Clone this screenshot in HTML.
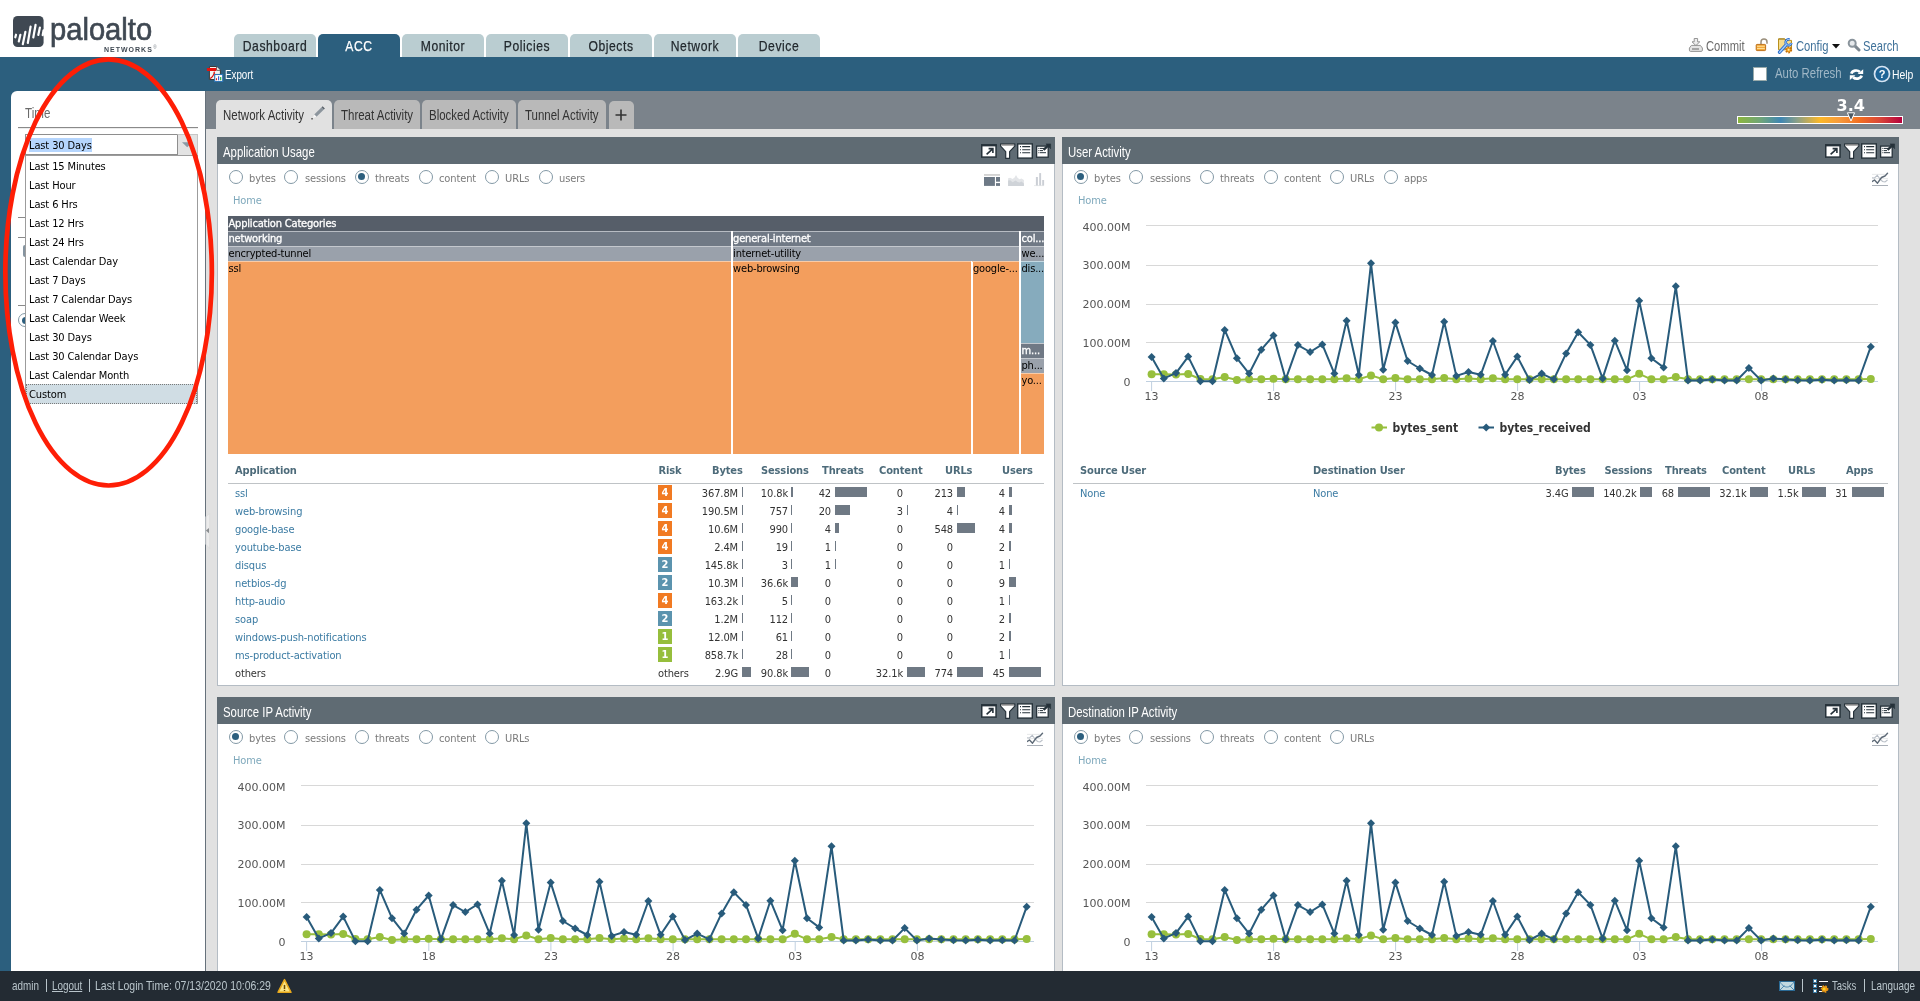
<!DOCTYPE html><html><head><meta charset="utf-8"><title>ACC</title><style>
*{box-sizing:border-box;margin:0;padding:0}
html,body{width:1920px;height:1001px;overflow:hidden;background:#fff}
body{position:relative;font-family:"DejaVu Sans Condensed","DejaVu Sans","Liberation Sans",sans-serif;font-size:11px;color:#333}
.a{position:absolute}
.n{position:absolute;white-space:nowrap;line-height:1;font-family:"Liberation Sans",sans-serif;transform-origin:0 50%;display:block}
.t{position:absolute;white-space:nowrap;line-height:1;font-size:11px;letter-spacing:-0.12px}
.tr{position:absolute;white-space:nowrap;line-height:1;font-size:11px;text-align:right}
.b{font-weight:bold;color:#4d6b7a}
.lk{color:#3b7ba3}
.bar{position:absolute;background:#6f7984;height:10px}
.rk{position:absolute;width:14px;height:15px;color:#fff;font-weight:bold;font-size:11px;line-height:16px;text-align:center}
.rd{position:absolute;width:14px;height:14px;border-radius:50%;border:1.3px solid #8399a6;background:#fff}
.rd.on:after{content:"";position:absolute;left:2.2px;top:2.2px;width:7px;height:7px;border-radius:50%;background:#2c5f7e}
.ph{position:absolute;height:27px;background:#5f6b73}
.pb{position:absolute;background:#fff;border:1px solid #b4bcc4;border-top:none}
.cv{font-family:"DejaVu Sans","Liberation Sans",sans-serif}
</style></head><body><div id="w" style="position:absolute;left:0;top:0;width:1920px;height:1001px;overflow:hidden;will-change:transform">
<div class="a" style="left:0px;top:57px;width:1920px;height:34px;background:#2c5f7e;"></div>
<div class="a" style="left:0px;top:91px;width:11px;height:880px;background:#2c5f7e;"></div>
<div class="a" style="left:11px;top:91px;width:8px;height:8px;background:#2c5f7e;"></div>
<div class="a" style="left:11px;top:91px;width:194px;height:880px;background:#fff;border-top-left-radius:6px;"></div>
<div class="a" style="left:205px;top:91px;width:1715px;height:38px;background:#7b838b;"></div>
<div class="a" style="left:205px;top:129px;width:1715px;height:842px;background:#e1e1e1;"></div>
<div class="a" style="left:205px;top:91px;width:1.2px;height:880px;background:#66717b;"></div>
<div class="a" style="left:0px;top:971px;width:1920px;height:30px;background:#232b33;"></div>
<svg class="a" style="left:13px;top:16px" width="32" height="31" viewBox="0 0 32 31"><rect x="0" y="0" width="30.6" height="31" rx="4.6" fill="#3f4852"/><g stroke="#fff" stroke-width="2.2" stroke-linecap="round" fill="none"><path d="M3 18.7L2.3 21.3"/><path d="M7.4 18.8L5.8 25.5"/><path d="M12.4 15.8L9.8 28.2"/><path d="M17.6 10.6L14.8 27"/><path d="M22.6 8.8L20.3 21.5"/><path d="M26.9 11.6L25.3 19"/><path d="M30.6 14.3L29.7 19.2"/></g></svg>
<span class="n" style="left:50px;top:12.93px;font-size:32px;color:#3f4852;transform:scaleX(0.911);-webkit-text-stroke:0.7px #3f4852;">paloalto</span>
<span class="n" style="left:104px;top:46.38px;font-size:7px;color:#3f4852;transform:scaleX(1.0);letter-spacing:1.0px;font-weight:bold;">NETWORKS</span>
<span class="n" style="left:153.2px;top:45.79px;font-size:4.5px;color:#7a828a;transform:scaleX(1.0);">&#174;</span>
<div class="a" style="left:234px;top:34px;width:82px;height:23px;background:#bacdd1;border-radius:5px 5px 0 0"></div>
<span class="n" style="left:234px;top:38.41px;-webkit-text-stroke:0.25px;width:101.23px;text-align:center;font-size:15px;color:#22292e;transform:scaleX(0.81);letter-spacing:0.7px">Dashboard</span>
<div class="a" style="left:318px;top:34px;width:82px;height:23px;background:#2c5f7e;border-radius:5px 5px 0 0"></div>
<span class="n" style="left:318px;top:38.41px;-webkit-text-stroke:0.25px;width:101.23px;text-align:center;font-size:15px;color:#fff;transform:scaleX(0.81);letter-spacing:0.7px">ACC</span>
<div class="a" style="left:402px;top:34px;width:82px;height:23px;background:#bacdd1;border-radius:5px 5px 0 0"></div>
<span class="n" style="left:402px;top:38.41px;-webkit-text-stroke:0.25px;width:101.23px;text-align:center;font-size:15px;color:#22292e;transform:scaleX(0.81);letter-spacing:0.7px">Monitor</span>
<div class="a" style="left:486px;top:34px;width:82px;height:23px;background:#bacdd1;border-radius:5px 5px 0 0"></div>
<span class="n" style="left:486px;top:38.41px;-webkit-text-stroke:0.25px;width:101.23px;text-align:center;font-size:15px;color:#22292e;transform:scaleX(0.81);letter-spacing:0.7px">Policies</span>
<div class="a" style="left:570px;top:34px;width:82px;height:23px;background:#bacdd1;border-radius:5px 5px 0 0"></div>
<span class="n" style="left:570px;top:38.41px;-webkit-text-stroke:0.25px;width:101.23px;text-align:center;font-size:15px;color:#22292e;transform:scaleX(0.81);letter-spacing:0.7px">Objects</span>
<div class="a" style="left:654px;top:34px;width:82px;height:23px;background:#bacdd1;border-radius:5px 5px 0 0"></div>
<span class="n" style="left:654px;top:38.41px;-webkit-text-stroke:0.25px;width:101.23px;text-align:center;font-size:15px;color:#22292e;transform:scaleX(0.81);letter-spacing:0.7px">Network</span>
<div class="a" style="left:738px;top:34px;width:82px;height:23px;background:#bacdd1;border-radius:5px 5px 0 0"></div>
<span class="n" style="left:738px;top:38.41px;-webkit-text-stroke:0.25px;width:101.23px;text-align:center;font-size:15px;color:#22292e;transform:scaleX(0.81);letter-spacing:0.7px">Device</span>
<svg class="a" style="left:1688px;top:37px" width="16" height="16" viewBox="0 0 16 16"><path d="M6.2 1.5h3.4v3.3h2.2L7.9 8.6 4 4.8h2.2z" fill="#ededed" stroke="#8a8a8a" stroke-width="0.9"/><path d="M3.4 8.4h9l2 2.6v2.2a1.2 1.2 0 0 1-1.2 1.2H2.6a1.2 1.2 0 0 1-1.2-1.2V11z" fill="#e4e4e4" stroke="#8a8a8a" stroke-width="0.9"/><path d="M4 12h7" stroke="#666" stroke-width="1"/></svg>
<span class="n" style="left:1706px;top:38.76px;font-size:14px;color:#6a6a6a;transform:scaleX(0.8);">Commit</span>
<svg class="a" style="left:1755px;top:38px" width="14" height="14" viewBox="0 0 14 14"><path d="M6 6.5V4a3 3 0 0 1 6 0v1.8" fill="none" stroke="#9a8f7c" stroke-width="1.5"/><rect x="1.2" y="6.4" width="9.4" height="6.2" rx="0.8" fill="#f2a93a" stroke="#b8660e" stroke-width="0.9"/><path d="M2 8.3h7.8M2 10.5h7.8" stroke="#ffe2a0" stroke-width="0.9"/></svg>
<svg class="a" style="left:1777px;top:37px" width="18" height="18" viewBox="0 0 18 18"><path d="M1.5 1.8h6.2l1.6 1.6h5.2v9.4h-13z" fill="#f6dc8c" stroke="#b8901e" stroke-width="1"/><path d="M1.8 2.1h5.8l1.6 1.6" fill="none" stroke="#7a5e10" stroke-width="0.6"/><circle cx="11.6" cy="12.8" r="2.6" fill="#f3a21c" stroke="#c4700c" stroke-width="2" stroke-dasharray="1.5 1.2"/><circle cx="11.6" cy="12.8" r="1" fill="#ffe9a8"/><path d="M2.6 15.2l6.6-7.4" stroke="#2b6fd0" stroke-width="3.4" stroke-linecap="round"/><path d="M12.6 2.6a2.9 2.9 0 1 0 1.8 3.4" fill="none" stroke="#2b6fd0" stroke-width="2.6"/><path d="M2.6 15.2l6.6-7.4" stroke="#a9d0fa" stroke-width="1.3" stroke-linecap="round"/><path d="M12.6 2.6a2.9 2.9 0 1 0 1.8 3.4" fill="none" stroke="#a9d0fa" stroke-width="0.9"/></svg>
<span class="n" style="left:1796px;top:38.76px;font-size:14px;color:#40729a;transform:scaleX(0.8);">Config</span>
<svg class="a" style="left:1832px;top:44px" width="8" height="5" viewBox="0 0 8 5"><path d="M0 0h8L4 4.5z" fill="#111"/></svg>
<svg class="a" style="left:1847px;top:38px" width="14" height="14" viewBox="0 0 14 14"><path d="M7.6 7.6l4.4 4.4" stroke="#7d8790" stroke-width="3" stroke-linecap="round"/><circle cx="5.2" cy="5.2" r="3.5" fill="#e6e9ec" stroke="#8a949c" stroke-width="2"/></svg>
<span class="n" style="left:1863px;top:38.76px;font-size:14px;color:#40729a;transform:scaleX(0.8);">Search</span>
<svg class="a" style="left:206px;top:65px" width="18" height="18" viewBox="0 0 18 18"><path d="M3.4 1.5h7.4l3.6 3.6v9.4h-11z" fill="#f3f3f3" stroke="#3a3a3a" stroke-width="1"/><path d="M10.6 1.7v3.6h3.6" fill="#fff" stroke="#3a3a3a" stroke-width="0.8"/><rect x="0.9" y="3" width="9.4" height="3" rx="0.4" fill="#e8100c"/><path d="M4 13.6c2.3-1.2 3.9-3.6 4.5-7M7.6 7.4c.8 1.8 1.9 3 3.4 3.8" fill="none" stroke="#d8100c" stroke-width="1.1"/><rect x="8.7" y="9.5" width="8" height="7" fill="#fff" stroke="#2e75b6" stroke-width="1.1"/><path d="M10.5 15.2v-2" stroke="#e0201a" stroke-width="1.1"/><path d="M12.6 15.2v-4" stroke="#2f55c8" stroke-width="1.1"/><path d="M14.7 15.2v-3.2" stroke="#18a838" stroke-width="1.1"/></svg>
<span class="n" style="left:225px;top:67.50px;font-size:13px;color:#fff;transform:scaleX(0.75);">Export</span>
<div class="a" style="left:1753px;top:67px;width:14px;height:14px;background:#fff;border:1px solid #9aa;"></div>
<span class="n" style="left:1775px;top:64.91px;font-size:15px;color:#9fb7c6;transform:scaleX(0.76);">Auto Refresh</span>
<svg class="a" style="left:1849px;top:68px" width="16" height="14" viewBox="0 0 16 14"><g fill="none" stroke="#fff" stroke-width="2.7"><path d="M2.3 5.6a5 4.2 0 0 1 8.6-1.6"/><path d="M12.7 7.6a5 4.2 0 0 1-8.6 1.6"/></g><path d="M8.6 5.9h5.6V1.2z" fill="#fff"/><path d="M6.4 7.3H0.8v4.7z" fill="#fff"/></svg>
<svg class="a" style="left:1873px;top:65px" width="18" height="18" viewBox="0 0 18 18"><circle cx="9" cy="9" r="7.5" fill="#1f6597" stroke="#d6e4f2" stroke-width="1.7"/><text x="9" y="13" text-anchor="middle" font-family="Liberation Sans,sans-serif" font-weight="bold" font-size="11" fill="#fff">?</text></svg>
<span class="n" style="left:1892px;top:67.80px;font-size:13px;color:#fff;transform:scaleX(0.8);">Help</span>
<div class="a" style="left:216px;top:100px;width:116px;height:29px;background:#e1e1e1;border-radius:5px 5px 0 0;"></div>
<span class="n" style="left:223px;top:108.16px;font-size:14px;color:#333;transform:scaleX(0.82);">Network Activity</span>
<svg class="a" style="left:310px;top:104px" width="16" height="17" viewBox="0 0 16 17"><path d="M4.2 10.4L11.6 3.2l2.3 2.3-7.4 7.2z" fill="#8c959d"/><path d="M11.6 3.2l1-1 2.3 2.3-1 1z" fill="#565e66"/><path d="M4.2 10.4l-1.5 3.7 3.8-1.4z" fill="#f6f6f6"/><rect x="1.3" y="14" width="1.5" height="1.5" fill="#555"/></svg>
<div class="a" style="left:334px;top:100px;width:86px;height:29px;background:#b9b9b9;border-radius:5px 5px 0 0;"></div>
<span class="n" style="left:340.5px;top:108.16px;font-size:14px;color:#333;transform:scaleX(0.82);">Threat Activity</span>
<div class="a" style="left:422px;top:100px;width:94px;height:29px;background:#b9b9b9;border-radius:5px 5px 0 0;"></div>
<span class="n" style="left:428.5px;top:108.16px;font-size:14px;color:#333;transform:scaleX(0.82);">Blocked Activity</span>
<div class="a" style="left:518px;top:100px;width:88px;height:29px;background:#b9b9b9;border-radius:5px 5px 0 0;"></div>
<span class="n" style="left:525px;top:108.16px;font-size:14px;color:#333;transform:scaleX(0.82);">Tunnel Activity</span>
<div class="a" style="left:609px;top:101px;width:24.5px;height:28px;background:#b9b9b9;border-radius:5px 5px 0 0;"></div>
<svg class="a" style="left:615px;top:109px" width="12" height="12" viewBox="0 0 12 12"><path d="M6 0.5v11M0.5 6h11" stroke="#333" stroke-width="1.6"/></svg>
<span class="n" style="left:1836.5px;top:97.76px;font-size:16px;color:#fff;transform:scaleX(1.0);font-family:'DejaVu Sans',sans-serif;font-weight:bold;">3.4</span>
<div class="a" style="left:1737px;top:116px;width:166px;height:8px;border:1px solid #fff;background:linear-gradient(90deg,#8cb63d 0%,#6fa57a 14%,#3f86b3 26%,#8aa089 36%,#fbb829 50%,#f79a3c 62%,#f26f21 74%,#d8453a 87%,#b5003c 100%)"></div>
<svg class="a" style="left:1845.6px;top:112px" width="10" height="10" viewBox="0 0 10 10"><path d="M1.4 0.8h7.2L5 9z" fill="#4d5a64" stroke="#fff" stroke-width="1"/></svg>
<div class="ph" style="left:217px;top:137px;width:838px"></div>
<div class="pb" style="left:217px;top:164px;width:838px;height:522px"></div>
<span class="n" style="left:223px;top:144.73px;font-size:14.5px;color:#fff;transform:scaleX(0.785);">Application Usage</span>
<svg class="a" style="left:980px;top:143px" width="72" height="17" viewBox="0 0 72 17"><rect x="1.75" y="2" width="14.3" height="12.1" fill="#fff" stroke="#26323a" stroke-width="1.5"/><path d="M1 2.3h15.8" stroke="#26323a" stroke-width="2.2"/><path d="M6.6 11.4l5.8-5.3M8.6 5.6h4.3v4.3" fill="none" stroke="#26323a" stroke-width="1.6"/><path d="M20.6 0.8h14.2v2.3l-5.2 5.6v6.7h-3.9V8.7l-5.1-5.6z" fill="#fff" stroke="#26323a" stroke-width="1.2" stroke-linejoin="round"/><path d="M21.4 1.9h12.6" stroke="#7b7b7b" stroke-width="1.4"/><rect x="37.7" y="0.9" width="14.6" height="14.2" fill="#fff" stroke="#26323a" stroke-width="1.4"/><path d="M40 3.6h1M42.2 3.6h8M40 6.7h1M42.2 6.7h8M40 9.8h1M42.2 9.8h8" stroke="#26323a" stroke-width="1.1"/><rect x="56.6" y="3.1" width="11.6" height="11.1" fill="#fff" stroke="#26323a" stroke-width="1.3"/><path d="M58.4 5.4h1M60 5.4h4M58.4 7.6h1M60 7.6h3M58.4 9.7h1M60 9.7h6" stroke="#26323a" stroke-width="1"/><path d="M63.6 6.8l5-4.6" stroke="#26323a" stroke-width="2.4"/><path d="M66 0.9h4.6v4.8z" fill="#26323a" stroke="#26323a" stroke-width="0.6" stroke-linejoin="round"/></svg>
<div class="ph" style="left:1062px;top:137px;width:837px"></div>
<div class="pb" style="left:1062px;top:164px;width:837px;height:522px"></div>
<span class="n" style="left:1068px;top:144.73px;font-size:14.5px;color:#fff;transform:scaleX(0.785);">User Activity</span>
<svg class="a" style="left:1824px;top:143px" width="72" height="17" viewBox="0 0 72 17"><rect x="1.75" y="2" width="14.3" height="12.1" fill="#fff" stroke="#26323a" stroke-width="1.5"/><path d="M1 2.3h15.8" stroke="#26323a" stroke-width="2.2"/><path d="M6.6 11.4l5.8-5.3M8.6 5.6h4.3v4.3" fill="none" stroke="#26323a" stroke-width="1.6"/><path d="M20.6 0.8h14.2v2.3l-5.2 5.6v6.7h-3.9V8.7l-5.1-5.6z" fill="#fff" stroke="#26323a" stroke-width="1.2" stroke-linejoin="round"/><path d="M21.4 1.9h12.6" stroke="#7b7b7b" stroke-width="1.4"/><rect x="37.7" y="0.9" width="14.6" height="14.2" fill="#fff" stroke="#26323a" stroke-width="1.4"/><path d="M40 3.6h1M42.2 3.6h8M40 6.7h1M42.2 6.7h8M40 9.8h1M42.2 9.8h8" stroke="#26323a" stroke-width="1.1"/><rect x="56.6" y="3.1" width="11.6" height="11.1" fill="#fff" stroke="#26323a" stroke-width="1.3"/><path d="M58.4 5.4h1M60 5.4h4M58.4 7.6h1M60 7.6h3M58.4 9.7h1M60 9.7h6" stroke="#26323a" stroke-width="1"/><path d="M63.6 6.8l5-4.6" stroke="#26323a" stroke-width="2.4"/><path d="M66 0.9h4.6v4.8z" fill="#26323a" stroke="#26323a" stroke-width="0.6" stroke-linejoin="round"/></svg>
<div class="ph" style="left:217px;top:697px;width:838px"></div>
<div class="pb" style="left:217px;top:724px;width:838px;height:273px"></div>
<span class="n" style="left:223px;top:704.73px;font-size:14.5px;color:#fff;transform:scaleX(0.785);">Source IP Activity</span>
<svg class="a" style="left:980px;top:703px" width="72" height="17" viewBox="0 0 72 17"><rect x="1.75" y="2" width="14.3" height="12.1" fill="#fff" stroke="#26323a" stroke-width="1.5"/><path d="M1 2.3h15.8" stroke="#26323a" stroke-width="2.2"/><path d="M6.6 11.4l5.8-5.3M8.6 5.6h4.3v4.3" fill="none" stroke="#26323a" stroke-width="1.6"/><path d="M20.6 0.8h14.2v2.3l-5.2 5.6v6.7h-3.9V8.7l-5.1-5.6z" fill="#fff" stroke="#26323a" stroke-width="1.2" stroke-linejoin="round"/><path d="M21.4 1.9h12.6" stroke="#7b7b7b" stroke-width="1.4"/><rect x="37.7" y="0.9" width="14.6" height="14.2" fill="#fff" stroke="#26323a" stroke-width="1.4"/><path d="M40 3.6h1M42.2 3.6h8M40 6.7h1M42.2 6.7h8M40 9.8h1M42.2 9.8h8" stroke="#26323a" stroke-width="1.1"/><rect x="56.6" y="3.1" width="11.6" height="11.1" fill="#fff" stroke="#26323a" stroke-width="1.3"/><path d="M58.4 5.4h1M60 5.4h4M58.4 7.6h1M60 7.6h3M58.4 9.7h1M60 9.7h6" stroke="#26323a" stroke-width="1"/><path d="M63.6 6.8l5-4.6" stroke="#26323a" stroke-width="2.4"/><path d="M66 0.9h4.6v4.8z" fill="#26323a" stroke="#26323a" stroke-width="0.6" stroke-linejoin="round"/></svg>
<div class="ph" style="left:1062px;top:697px;width:837px"></div>
<div class="pb" style="left:1062px;top:724px;width:837px;height:273px"></div>
<span class="n" style="left:1068px;top:704.73px;font-size:14.5px;color:#fff;transform:scaleX(0.785);">Destination IP Activity</span>
<svg class="a" style="left:1824px;top:703px" width="72" height="17" viewBox="0 0 72 17"><rect x="1.75" y="2" width="14.3" height="12.1" fill="#fff" stroke="#26323a" stroke-width="1.5"/><path d="M1 2.3h15.8" stroke="#26323a" stroke-width="2.2"/><path d="M6.6 11.4l5.8-5.3M8.6 5.6h4.3v4.3" fill="none" stroke="#26323a" stroke-width="1.6"/><path d="M20.6 0.8h14.2v2.3l-5.2 5.6v6.7h-3.9V8.7l-5.1-5.6z" fill="#fff" stroke="#26323a" stroke-width="1.2" stroke-linejoin="round"/><path d="M21.4 1.9h12.6" stroke="#7b7b7b" stroke-width="1.4"/><rect x="37.7" y="0.9" width="14.6" height="14.2" fill="#fff" stroke="#26323a" stroke-width="1.4"/><path d="M40 3.6h1M42.2 3.6h8M40 6.7h1M42.2 6.7h8M40 9.8h1M42.2 9.8h8" stroke="#26323a" stroke-width="1.1"/><rect x="56.6" y="3.1" width="11.6" height="11.1" fill="#fff" stroke="#26323a" stroke-width="1.3"/><path d="M58.4 5.4h1M60 5.4h4M58.4 7.6h1M60 7.6h3M58.4 9.7h1M60 9.7h6" stroke="#26323a" stroke-width="1"/><path d="M63.6 6.8l5-4.6" stroke="#26323a" stroke-width="2.4"/><path d="M66 0.9h4.6v4.8z" fill="#26323a" stroke="#26323a" stroke-width="0.6" stroke-linejoin="round"/></svg>
<span class="rd" style="left:228.5px;top:170px"></span>
<span class="t " style="left:249px;top:173.00px;color:#7a7a7a;">bytes</span>
<span class="rd" style="left:284.4px;top:170px"></span>
<span class="t " style="left:305px;top:173.00px;color:#7a7a7a;">sessions</span>
<span class="rd on" style="left:354.5px;top:170px"></span>
<span class="t " style="left:375px;top:173.00px;color:#7a7a7a;">threats</span>
<span class="rd" style="left:418.5px;top:170px"></span>
<span class="t " style="left:439px;top:173.00px;color:#7a7a7a;">content</span>
<span class="rd" style="left:484.5px;top:170px"></span>
<span class="t " style="left:505px;top:173.00px;color:#7a7a7a;">URLs</span>
<span class="rd" style="left:538.5px;top:170px"></span>
<span class="t " style="left:559px;top:173.00px;color:#7a7a7a;">users</span>
<span class="t " style="left:233px;top:195.00px;color:#7fa9bc;">Home</span>
<span class="rd on" style="left:1073.5px;top:170px"></span>
<span class="t " style="left:1094px;top:173.00px;color:#7a7a7a;">bytes</span>
<span class="rd" style="left:1129.4px;top:170px"></span>
<span class="t " style="left:1150px;top:173.00px;color:#7a7a7a;">sessions</span>
<span class="rd" style="left:1199.5px;top:170px"></span>
<span class="t " style="left:1220px;top:173.00px;color:#7a7a7a;">threats</span>
<span class="rd" style="left:1263.5px;top:170px"></span>
<span class="t " style="left:1284px;top:173.00px;color:#7a7a7a;">content</span>
<span class="rd" style="left:1329.5px;top:170px"></span>
<span class="t " style="left:1350px;top:173.00px;color:#7a7a7a;">URLs</span>
<span class="rd" style="left:1383.5px;top:170px"></span>
<span class="t " style="left:1404px;top:173.00px;color:#7a7a7a;">apps</span>
<span class="t " style="left:1078px;top:195.00px;color:#7fa9bc;">Home</span>
<span class="rd on" style="left:228.5px;top:730px"></span>
<span class="t " style="left:249px;top:733.00px;color:#7a7a7a;">bytes</span>
<span class="rd" style="left:284.4px;top:730px"></span>
<span class="t " style="left:305px;top:733.00px;color:#7a7a7a;">sessions</span>
<span class="rd" style="left:354.5px;top:730px"></span>
<span class="t " style="left:375px;top:733.00px;color:#7a7a7a;">threats</span>
<span class="rd" style="left:418.5px;top:730px"></span>
<span class="t " style="left:439px;top:733.00px;color:#7a7a7a;">content</span>
<span class="rd" style="left:484.5px;top:730px"></span>
<span class="t " style="left:505px;top:733.00px;color:#7a7a7a;">URLs</span>
<span class="t " style="left:233px;top:755.00px;color:#7fa9bc;">Home</span>
<span class="rd on" style="left:1073.5px;top:730px"></span>
<span class="t " style="left:1094px;top:733.00px;color:#7a7a7a;">bytes</span>
<span class="rd" style="left:1129.4px;top:730px"></span>
<span class="t " style="left:1150px;top:733.00px;color:#7a7a7a;">sessions</span>
<span class="rd" style="left:1199.5px;top:730px"></span>
<span class="t " style="left:1220px;top:733.00px;color:#7a7a7a;">threats</span>
<span class="rd" style="left:1263.5px;top:730px"></span>
<span class="t " style="left:1284px;top:733.00px;color:#7a7a7a;">content</span>
<span class="rd" style="left:1329.5px;top:730px"></span>
<span class="t " style="left:1350px;top:733.00px;color:#7a7a7a;">URLs</span>
<span class="t " style="left:1078px;top:755.00px;color:#7fa9bc;">Home</span>
<svg class="a" style="left:1872px;top:172px" width="17" height="15" viewBox="0 0 17 15"><path d="M0 2.4h13M0 6.6h16" stroke="#dfe2e5" stroke-width="0.8"/><path d="M0 13.5h16" stroke="#aab0b8" stroke-width="1"/><path d="M0 5.8L2.5 6 5.3 3.3 8 7l2.5 2.5 2.5.5 2.5-2" fill="none" stroke="#b9bfc7" stroke-width="1.1"/><path d="M0.3 9.5L2.5 8l3 3.2 4-5.7L13 4l2.5-2.7" fill="none" stroke="#5f6b78" stroke-width="1.4" stroke-linejoin="round" stroke-linecap="round"/></svg>
<svg class="a" style="left:1027px;top:732px" width="17" height="15" viewBox="0 0 17 15"><path d="M0 2.4h13M0 6.6h16" stroke="#dfe2e5" stroke-width="0.8"/><path d="M0 13.5h16" stroke="#aab0b8" stroke-width="1"/><path d="M0 5.8L2.5 6 5.3 3.3 8 7l2.5 2.5 2.5.5 2.5-2" fill="none" stroke="#b9bfc7" stroke-width="1.1"/><path d="M0.3 9.5L2.5 8l3 3.2 4-5.7L13 4l2.5-2.7" fill="none" stroke="#5f6b78" stroke-width="1.4" stroke-linejoin="round" stroke-linecap="round"/></svg>
<svg class="a" style="left:1872px;top:732px" width="17" height="15" viewBox="0 0 17 15"><path d="M0 2.4h13M0 6.6h16" stroke="#dfe2e5" stroke-width="0.8"/><path d="M0 13.5h16" stroke="#aab0b8" stroke-width="1"/><path d="M0 5.8L2.5 6 5.3 3.3 8 7l2.5 2.5 2.5.5 2.5-2" fill="none" stroke="#b9bfc7" stroke-width="1.1"/><path d="M0.3 9.5L2.5 8l3 3.2 4-5.7L13 4l2.5-2.7" fill="none" stroke="#5f6b78" stroke-width="1.4" stroke-linejoin="round" stroke-linecap="round"/></svg>
<svg class="a" style="left:984px;top:173px" width="62" height="14" viewBox="0 0 62 14"><rect x="0" y="1.1" width="16" height="1.7" fill="#cfcfcf"/><rect x="0" y="4" width="10.9" height="8.9" fill="#6d7986"/><rect x="12" y="4" width="4" height="4.7" fill="#6d7986"/><rect x="12" y="10.1" width="4" height="2.8" fill="#6d7986"/><path d="M24.1 12.9V5.2l2-.4 2.5 1.3 2-1.6L32 2l1.5 2.8 2 1.5 2-.8 2.4 1.6v5.8z" fill="#e3e5e8"/><path d="M24.1 12.9V7.4l2-.2 2.5 2 3-1.8 2 1.6 2 .4 1.8-1 2.5 2v2.5z" fill="#cfd3d8"/><path d="M50 12.6h10" stroke="#e1e3e6" stroke-width="0.8"/><rect x="51.9" y="4" width="2" height="8.5" fill="#cbcfd5"/><rect x="55.2" y="0.1" width="1.9" height="12.4" fill="#cbcfd5"/><rect x="58.2" y="7" width="1.9" height="5.5" fill="#cbcfd5"/></svg>
<div class="a" style="left:228px;top:231px;width:816px;height:1px;background:#b7bcc3;"></div>
<div class="a" style="left:228px;top:246px;width:816px;height:1px;background:#c4c8ce;"></div>
<div class="a" style="left:228px;top:261px;width:816px;height:1px;background:#f9cba7;"></div>
<div class="a" style="left:731px;top:231px;width:1.6px;height:223px;background:#fff;"></div>
<div class="a" style="left:1019px;top:231px;width:1.9px;height:223px;background:#fff;"></div>
<div class="a" style="left:970.8px;top:261px;width:1.7px;height:193px;background:#fff;"></div>
<div class="a" style="left:1021px;top:343px;width:23px;height:1px;background:#c4c8ce;"></div>
<div class="a" style="left:1021px;top:358px;width:23px;height:1px;background:#c4c8ce;"></div>
<div class="a" style="left:1021px;top:373px;width:23px;height:1px;background:#f9cba7;"></div>
<div class="a" style="left:228px;top:216px;width:816px;height:15px;background:#565e69;color:#fff;font-size:11px;line-height:14px;padding-left:0.5px;overflow:hidden;white-space:nowrap;letter-spacing:-0.18px;line-height:16px;-webkit-text-stroke:0.3px #fff;">Application Categories</div>
<div class="a" style="left:228px;top:232px;width:503px;height:14px;background:#707985;color:#fff;font-size:11px;line-height:14px;padding-left:0.5px;overflow:hidden;white-space:nowrap;letter-spacing:-0.18px;-webkit-text-stroke:0.3px #fff;">networking</div>
<div class="a" style="left:732.6px;top:232px;width:286.4px;height:14px;background:#707985;color:#fff;font-size:11px;line-height:14px;padding-left:0.5px;overflow:hidden;white-space:nowrap;letter-spacing:-0.18px;-webkit-text-stroke:0.3px #fff;">general-internet</div>
<div class="a" style="left:1021px;top:232px;width:23px;height:14px;background:#707985;color:#fff;font-size:11px;line-height:14px;padding-left:0.5px;overflow:hidden;white-space:nowrap;letter-spacing:-0.18px;-webkit-text-stroke:0.3px #fff;">col...</div>
<div class="a" style="left:228px;top:247px;width:503px;height:14px;background:#9aa1ab;color:#000;font-size:11px;line-height:14px;padding-left:0.5px;overflow:hidden;white-space:nowrap;letter-spacing:-0.18px;">encrypted-tunnel</div>
<div class="a" style="left:732.6px;top:247px;width:286.4px;height:14px;background:#9aa1ab;color:#000;font-size:11px;line-height:14px;padding-left:0.5px;overflow:hidden;white-space:nowrap;letter-spacing:-0.18px;">internet-utility</div>
<div class="a" style="left:1021px;top:247px;width:23px;height:14px;background:#9aa1ab;color:#000;font-size:11px;line-height:14px;padding-left:0.5px;overflow:hidden;white-space:nowrap;letter-spacing:-0.18px;">we...</div>
<div class="a" style="left:228px;top:262px;width:503px;height:192px;background:#f39e5d;color:#000;font-size:11px;line-height:14px;padding-left:0.5px;overflow:hidden;white-space:nowrap;letter-spacing:-0.18px;">ssl</div>
<div class="a" style="left:732.6px;top:262px;width:238.2px;height:192px;background:#f39e5d;color:#000;font-size:11px;line-height:14px;padding-left:0.5px;overflow:hidden;white-space:nowrap;letter-spacing:-0.18px;">web-browsing</div>
<div class="a" style="left:972.5px;top:262px;width:46.5px;height:192px;background:#f39e5d;color:#000;font-size:11px;line-height:14px;padding-left:0.5px;overflow:hidden;white-space:nowrap;letter-spacing:-0.18px;">google-...</div>
<div class="a" style="left:1021px;top:261px;width:23px;height:1px;background:#c3d8e2;"></div>
<div class="a" style="left:1021px;top:262px;width:23px;height:81px;background:#86abbd;color:#000;font-size:11px;line-height:14px;padding-left:0.5px;overflow:hidden;white-space:nowrap;letter-spacing:-0.18px;">dis...</div>
<div class="a" style="left:1021px;top:344px;width:23px;height:14px;background:#707985;color:#fff;font-size:11px;line-height:14px;padding-left:0.5px;overflow:hidden;white-space:nowrap;letter-spacing:-0.18px;-webkit-text-stroke:0.3px #fff;">m...</div>
<div class="a" style="left:1021px;top:359px;width:23px;height:14px;background:#9aa1ab;color:#000;font-size:11px;line-height:14px;padding-left:0.5px;overflow:hidden;white-space:nowrap;letter-spacing:-0.18px;">ph...</div>
<div class="a" style="left:1021px;top:374px;width:23px;height:80px;background:#f39e5d;color:#000;font-size:11px;line-height:14px;padding-left:0.5px;overflow:hidden;white-space:nowrap;letter-spacing:-0.18px;">yo...</div>
<div class="a" style="left:228px;top:483px;width:816px;height:1px;background:#bfc3c6;"></div>
<span class="t b" style="left:235px;top:465.00px;">Application</span>
<span class="t b" style="left:658.5px;top:465.00px;">Risk</span>
<span class="t b" style="left:712px;top:465.00px;">Bytes</span>
<span class="t b" style="left:761px;top:465.00px;">Sessions</span>
<span class="t b" style="left:822px;top:465.00px;">Threats</span>
<span class="t b" style="left:879px;top:465.00px;">Content</span>
<span class="t b" style="left:945px;top:465.00px;">URLs</span>
<span class="t b" style="left:1002px;top:465.00px;">Users</span>
<span class="t lk" style="left:235px;top:488.00px;">ssl</span>
<span class="rk" style="left:658px;top:485px;background:#f17a22">4</span>
<span class="t " style="right:1182px;top:488.00px;">367.8M</span>
<span class="bar" style="left:742px;top:487px;width:1px"></span>
<span class="t " style="right:1132px;top:488.00px;">10.8k</span>
<span class="bar" style="left:791px;top:487px;width:2px"></span>
<span class="t " style="right:1089px;top:488.00px;">42</span>
<span class="bar" style="left:835px;top:487px;width:32px"></span>
<span class="t " style="right:1017px;top:488.00px;">0</span>
<span class="t " style="right:967px;top:488.00px;">213</span>
<span class="bar" style="left:957px;top:487px;width:8px"></span>
<span class="t " style="right:915px;top:488.00px;">4</span>
<span class="bar" style="left:1009px;top:487px;width:3px"></span>
<span class="t lk" style="left:235px;top:506.00px;">web-browsing</span>
<span class="rk" style="left:658px;top:503px;background:#f17a22">4</span>
<span class="t " style="right:1182px;top:506.00px;">190.5M</span>
<span class="bar" style="left:742px;top:505px;width:1px"></span>
<span class="t " style="right:1132px;top:506.00px;">757</span>
<span class="bar" style="left:791px;top:505px;width:1px"></span>
<span class="t " style="right:1089px;top:506.00px;">20</span>
<span class="bar" style="left:835px;top:505px;width:15px"></span>
<span class="t " style="right:1017px;top:506.00px;">3</span>
<span class="bar" style="left:907px;top:505px;width:1px"></span>
<span class="t " style="right:967px;top:506.00px;">4</span>
<span class="bar" style="left:957px;top:505px;width:1px"></span>
<span class="t " style="right:915px;top:506.00px;">4</span>
<span class="bar" style="left:1009px;top:505px;width:3px"></span>
<span class="t lk" style="left:235px;top:524.00px;">google-base</span>
<span class="rk" style="left:658px;top:521px;background:#f17a22">4</span>
<span class="t " style="right:1182px;top:524.00px;">10.6M</span>
<span class="bar" style="left:742px;top:523px;width:1px"></span>
<span class="t " style="right:1132px;top:524.00px;">990</span>
<span class="bar" style="left:791px;top:523px;width:1px"></span>
<span class="t " style="right:1089px;top:524.00px;">4</span>
<span class="bar" style="left:835px;top:523px;width:4px"></span>
<span class="t " style="right:1017px;top:524.00px;">0</span>
<span class="t " style="right:967px;top:524.00px;">548</span>
<span class="bar" style="left:957px;top:523px;width:18px"></span>
<span class="t " style="right:915px;top:524.00px;">4</span>
<span class="bar" style="left:1009px;top:523px;width:3px"></span>
<span class="t lk" style="left:235px;top:542.00px;">youtube-base</span>
<span class="rk" style="left:658px;top:539px;background:#f17a22">4</span>
<span class="t " style="right:1182px;top:542.00px;">2.4M</span>
<span class="bar" style="left:742px;top:541px;width:1px"></span>
<span class="t " style="right:1132px;top:542.00px;">19</span>
<span class="bar" style="left:791px;top:541px;width:1px"></span>
<span class="t " style="right:1089px;top:542.00px;">1</span>
<span class="bar" style="left:835px;top:541px;width:1px"></span>
<span class="t " style="right:1017px;top:542.00px;">0</span>
<span class="t " style="right:967px;top:542.00px;">0</span>
<span class="t " style="right:915px;top:542.00px;">2</span>
<span class="bar" style="left:1009px;top:541px;width:2px"></span>
<span class="t lk" style="left:235px;top:560.00px;">disqus</span>
<span class="rk" style="left:658px;top:557px;background:#5b93ae">2</span>
<span class="t " style="right:1182px;top:560.00px;">145.8k</span>
<span class="bar" style="left:742px;top:559px;width:1px"></span>
<span class="t " style="right:1132px;top:560.00px;">3</span>
<span class="bar" style="left:791px;top:559px;width:1px"></span>
<span class="t " style="right:1089px;top:560.00px;">1</span>
<span class="bar" style="left:835px;top:559px;width:1px"></span>
<span class="t " style="right:1017px;top:560.00px;">0</span>
<span class="t " style="right:967px;top:560.00px;">0</span>
<span class="t " style="right:915px;top:560.00px;">1</span>
<span class="bar" style="left:1009px;top:559px;width:1px"></span>
<span class="t lk" style="left:235px;top:578.00px;">netbios-dg</span>
<span class="rk" style="left:658px;top:575px;background:#5b93ae">2</span>
<span class="t " style="right:1182px;top:578.00px;">10.3M</span>
<span class="bar" style="left:742px;top:577px;width:1px"></span>
<span class="t " style="right:1132px;top:578.00px;">36.6k</span>
<span class="bar" style="left:791px;top:577px;width:7px"></span>
<span class="t " style="right:1089px;top:578.00px;">0</span>
<span class="t " style="right:1017px;top:578.00px;">0</span>
<span class="t " style="right:967px;top:578.00px;">0</span>
<span class="t " style="right:915px;top:578.00px;">9</span>
<span class="bar" style="left:1009px;top:577px;width:7px"></span>
<span class="t lk" style="left:235px;top:596.00px;">http-audio</span>
<span class="rk" style="left:658px;top:593px;background:#f17a22">4</span>
<span class="t " style="right:1182px;top:596.00px;">163.2k</span>
<span class="bar" style="left:742px;top:595px;width:1px"></span>
<span class="t " style="right:1132px;top:596.00px;">5</span>
<span class="bar" style="left:791px;top:595px;width:1px"></span>
<span class="t " style="right:1089px;top:596.00px;">0</span>
<span class="t " style="right:1017px;top:596.00px;">0</span>
<span class="t " style="right:967px;top:596.00px;">0</span>
<span class="t " style="right:915px;top:596.00px;">1</span>
<span class="bar" style="left:1009px;top:595px;width:1px"></span>
<span class="t lk" style="left:235px;top:614.00px;">soap</span>
<span class="rk" style="left:658px;top:611px;background:#5b93ae">2</span>
<span class="t " style="right:1182px;top:614.00px;">1.2M</span>
<span class="bar" style="left:742px;top:613px;width:1px"></span>
<span class="t " style="right:1132px;top:614.00px;">112</span>
<span class="bar" style="left:791px;top:613px;width:1px"></span>
<span class="t " style="right:1089px;top:614.00px;">0</span>
<span class="t " style="right:1017px;top:614.00px;">0</span>
<span class="t " style="right:967px;top:614.00px;">0</span>
<span class="t " style="right:915px;top:614.00px;">2</span>
<span class="bar" style="left:1009px;top:613px;width:2px"></span>
<span class="t lk" style="left:235px;top:632.00px;">windows-push-notifications</span>
<span class="rk" style="left:658px;top:629px;background:#96be3c">1</span>
<span class="t " style="right:1182px;top:632.00px;">12.0M</span>
<span class="bar" style="left:742px;top:631px;width:1px"></span>
<span class="t " style="right:1132px;top:632.00px;">61</span>
<span class="bar" style="left:791px;top:631px;width:1px"></span>
<span class="t " style="right:1089px;top:632.00px;">0</span>
<span class="t " style="right:1017px;top:632.00px;">0</span>
<span class="t " style="right:967px;top:632.00px;">0</span>
<span class="t " style="right:915px;top:632.00px;">2</span>
<span class="bar" style="left:1009px;top:631px;width:2px"></span>
<span class="t lk" style="left:235px;top:650.00px;">ms-product-activation</span>
<span class="rk" style="left:658px;top:647px;background:#96be3c">1</span>
<span class="t " style="right:1182px;top:650.00px;">858.7k</span>
<span class="bar" style="left:742px;top:649px;width:1px"></span>
<span class="t " style="right:1132px;top:650.00px;">28</span>
<span class="bar" style="left:791px;top:649px;width:1px"></span>
<span class="t " style="right:1089px;top:650.00px;">0</span>
<span class="t " style="right:1017px;top:650.00px;">0</span>
<span class="t " style="right:967px;top:650.00px;">0</span>
<span class="t " style="right:915px;top:650.00px;">1</span>
<span class="bar" style="left:1009px;top:649px;width:1px"></span>
<span class="t " style="left:235px;top:668.00px;">others</span>
<span class="t " style="left:658px;top:668.00px;">others</span>
<span class="t " style="right:1182px;top:668.00px;">2.9G</span>
<span class="bar" style="left:742px;top:667px;width:9px"></span>
<span class="t " style="right:1132px;top:668.00px;">90.8k</span>
<span class="bar" style="left:791px;top:667px;width:18px"></span>
<span class="t " style="right:1089px;top:668.00px;">0</span>
<span class="t " style="right:1017px;top:668.00px;">32.1k</span>
<span class="bar" style="left:907px;top:667px;width:18px"></span>
<span class="t " style="right:967px;top:668.00px;">774</span>
<span class="bar" style="left:957px;top:667px;width:26px"></span>
<span class="t " style="right:915px;top:668.00px;">45</span>
<span class="bar" style="left:1009px;top:667px;width:32px"></span>
<div class="a" style="left:1073px;top:483px;width:815px;height:1px;background:#bfc3c6;"></div>
<span class="t b" style="left:1080px;top:465.00px;">Source User</span>
<span class="t b" style="left:1313px;top:465.00px;">Destination User</span>
<span class="t b" style="left:1555px;top:465.00px;">Bytes</span>
<span class="t b" style="left:1604.5px;top:465.00px;">Sessions</span>
<span class="t b" style="left:1665px;top:465.00px;">Threats</span>
<span class="t b" style="left:1722px;top:465.00px;">Content</span>
<span class="t b" style="left:1788px;top:465.00px;">URLs</span>
<span class="t b" style="left:1846px;top:465.00px;">Apps</span>
<span class="t lk" style="left:1080px;top:488.00px;">None</span>
<span class="t lk" style="left:1313px;top:488.00px;">None</span>
<span class="t " style="right:351.5px;top:488.00px;">3.4G</span>
<span class="bar" style="left:1572px;top:487px;width:22px"></span>
<span class="t " style="right:283.5px;top:488.00px;">140.2k</span>
<span class="bar" style="left:1640px;top:487px;width:12px"></span>
<span class="t " style="right:246px;top:488.00px;">68</span>
<span class="bar" style="left:1678px;top:487px;width:32px"></span>
<span class="t " style="right:173.5px;top:488.00px;">32.1k</span>
<span class="bar" style="left:1750px;top:487px;width:18px"></span>
<span class="t " style="right:121.5px;top:488.00px;">1.5k</span>
<span class="bar" style="left:1802px;top:487px;width:24px"></span>
<span class="t " style="right:72.5px;top:488.00px;">31</span>
<span class="bar" style="left:1852px;top:487px;width:32px"></span>
<svg class="a cv" style="left:1062px;top:210px" width="836" height="240" viewBox="1062 210 836 240"><path d="M1146 225.5H1878.0" stroke="#d8d8d8" stroke-width="1"/><text x="1130.5" y="231" text-anchor="end" font-size="11" fill="#555">400.00M</text><path d="M1146 265.5H1878.0" stroke="#d8d8d8" stroke-width="1"/><text x="1130.5" y="269" text-anchor="end" font-size="11" fill="#555">300.00M</text><path d="M1146 304.5H1878.0" stroke="#d8d8d8" stroke-width="1"/><text x="1130.5" y="308" text-anchor="end" font-size="11" fill="#555">200.00M</text><path d="M1146 342.5H1878.0" stroke="#d8d8d8" stroke-width="1"/><text x="1130.5" y="347" text-anchor="end" font-size="11" fill="#555">100.00M</text><path d="M1146 381.5H1878.0" stroke="#c0d0e0" stroke-width="1"/><text x="1130.5" y="386" text-anchor="end" font-size="11" fill="#555">0</text><path d="M1151.6 381.5v9.5" stroke="#c0d0e0" stroke-width="1"/><text x="1151.6" y="400" text-anchor="middle" font-size="11" fill="#555">13</text><path d="M1273.6 381.5v9.5" stroke="#c0d0e0" stroke-width="1"/><text x="1273.6" y="400" text-anchor="middle" font-size="11" fill="#555">18</text><path d="M1395.6 381.5v9.5" stroke="#c0d0e0" stroke-width="1"/><text x="1395.6" y="400" text-anchor="middle" font-size="11" fill="#555">23</text><path d="M1517.6 381.5v9.5" stroke="#c0d0e0" stroke-width="1"/><text x="1517.6" y="400" text-anchor="middle" font-size="11" fill="#555">28</text><path d="M1639.6 381.5v9.5" stroke="#c0d0e0" stroke-width="1"/><text x="1639.6" y="400" text-anchor="middle" font-size="11" fill="#555">03</text><path d="M1761.6 381.5v9.5" stroke="#c0d0e0" stroke-width="1"/><text x="1761.6" y="400" text-anchor="middle" font-size="11" fill="#555">08</text><path d="M1151.6 374.3 L1163.8 374.3 L1176.0 374.5 L1188.2 374.0 L1200.4 379.0 L1212.5 379.2 L1224.7 377.0 L1236.9 380.0 L1249.1 379.3 L1261.3 379.3 L1273.5 378.8 L1285.7 379.3 L1297.9 379.3 L1310.1 379.3 L1322.3 379.3 L1334.4 379.3 L1346.6 378.2 L1358.8 379.3 L1371.0 375.4 L1383.2 379.3 L1395.4 378.0 L1407.6 379.3 L1419.8 379.3 L1432.0 379.3 L1444.2 378.0 L1456.3 379.3 L1468.5 378.6 L1480.7 379.3 L1492.9 378.2 L1505.1 379.3 L1517.3 379.3 L1529.5 379.3 L1541.7 379.3 L1553.9 379.3 L1566.1 379.3 L1578.2 379.3 L1590.4 379.3 L1602.6 379.3 L1614.8 379.3 L1627.0 379.3 L1639.2 373.8 L1651.4 379.3 L1663.6 379.3 L1675.8 377.0 L1688.0 379.3 L1700.1 379.3 L1712.3 379.3 L1724.5 379.3 L1736.7 379.3 L1748.9 379.3 L1761.1 379.3 L1773.3 379.3 L1785.5 379.3 L1797.7 379.3 L1809.9 379.3 L1822.0 379.3 L1834.2 379.3 L1846.4 379.3 L1858.6 379.3 L1870.8 378.9" fill="none" stroke="#97bf3d" stroke-width="2" stroke-linejoin="round"/><circle cx="1151.6" cy="374.3" r="4" fill="#97bf3d"/><circle cx="1163.8" cy="374.3" r="4" fill="#97bf3d"/><circle cx="1176.0" cy="374.5" r="4" fill="#97bf3d"/><circle cx="1188.2" cy="374.0" r="4" fill="#97bf3d"/><circle cx="1200.4" cy="379.0" r="4" fill="#97bf3d"/><circle cx="1212.5" cy="379.2" r="4" fill="#97bf3d"/><circle cx="1224.7" cy="377.0" r="4" fill="#97bf3d"/><circle cx="1236.9" cy="380.0" r="4" fill="#97bf3d"/><circle cx="1249.1" cy="379.3" r="4" fill="#97bf3d"/><circle cx="1261.3" cy="379.3" r="4" fill="#97bf3d"/><circle cx="1273.5" cy="378.8" r="4" fill="#97bf3d"/><circle cx="1285.7" cy="379.3" r="4" fill="#97bf3d"/><circle cx="1297.9" cy="379.3" r="4" fill="#97bf3d"/><circle cx="1310.1" cy="379.3" r="4" fill="#97bf3d"/><circle cx="1322.3" cy="379.3" r="4" fill="#97bf3d"/><circle cx="1334.4" cy="379.3" r="4" fill="#97bf3d"/><circle cx="1346.6" cy="378.2" r="4" fill="#97bf3d"/><circle cx="1358.8" cy="379.3" r="4" fill="#97bf3d"/><circle cx="1371.0" cy="375.4" r="4" fill="#97bf3d"/><circle cx="1383.2" cy="379.3" r="4" fill="#97bf3d"/><circle cx="1395.4" cy="378.0" r="4" fill="#97bf3d"/><circle cx="1407.6" cy="379.3" r="4" fill="#97bf3d"/><circle cx="1419.8" cy="379.3" r="4" fill="#97bf3d"/><circle cx="1432.0" cy="379.3" r="4" fill="#97bf3d"/><circle cx="1444.2" cy="378.0" r="4" fill="#97bf3d"/><circle cx="1456.3" cy="379.3" r="4" fill="#97bf3d"/><circle cx="1468.5" cy="378.6" r="4" fill="#97bf3d"/><circle cx="1480.7" cy="379.3" r="4" fill="#97bf3d"/><circle cx="1492.9" cy="378.2" r="4" fill="#97bf3d"/><circle cx="1505.1" cy="379.3" r="4" fill="#97bf3d"/><circle cx="1517.3" cy="379.3" r="4" fill="#97bf3d"/><circle cx="1529.5" cy="379.3" r="4" fill="#97bf3d"/><circle cx="1541.7" cy="379.3" r="4" fill="#97bf3d"/><circle cx="1553.9" cy="379.3" r="4" fill="#97bf3d"/><circle cx="1566.1" cy="379.3" r="4" fill="#97bf3d"/><circle cx="1578.2" cy="379.3" r="4" fill="#97bf3d"/><circle cx="1590.4" cy="379.3" r="4" fill="#97bf3d"/><circle cx="1602.6" cy="379.3" r="4" fill="#97bf3d"/><circle cx="1614.8" cy="379.3" r="4" fill="#97bf3d"/><circle cx="1627.0" cy="379.3" r="4" fill="#97bf3d"/><circle cx="1639.2" cy="373.8" r="4" fill="#97bf3d"/><circle cx="1651.4" cy="379.3" r="4" fill="#97bf3d"/><circle cx="1663.6" cy="379.3" r="4" fill="#97bf3d"/><circle cx="1675.8" cy="377.0" r="4" fill="#97bf3d"/><circle cx="1688.0" cy="379.3" r="4" fill="#97bf3d"/><circle cx="1700.1" cy="379.3" r="4" fill="#97bf3d"/><circle cx="1712.3" cy="379.3" r="4" fill="#97bf3d"/><circle cx="1724.5" cy="379.3" r="4" fill="#97bf3d"/><circle cx="1736.7" cy="379.3" r="4" fill="#97bf3d"/><circle cx="1748.9" cy="379.3" r="4" fill="#97bf3d"/><circle cx="1761.1" cy="379.3" r="4" fill="#97bf3d"/><circle cx="1773.3" cy="379.3" r="4" fill="#97bf3d"/><circle cx="1785.5" cy="379.3" r="4" fill="#97bf3d"/><circle cx="1797.7" cy="379.3" r="4" fill="#97bf3d"/><circle cx="1809.9" cy="379.3" r="4" fill="#97bf3d"/><circle cx="1822.0" cy="379.3" r="4" fill="#97bf3d"/><circle cx="1834.2" cy="379.3" r="4" fill="#97bf3d"/><circle cx="1846.4" cy="379.3" r="4" fill="#97bf3d"/><circle cx="1858.6" cy="379.3" r="4" fill="#97bf3d"/><circle cx="1870.8" cy="378.9" r="4" fill="#97bf3d"/><path d="M1151.6 357.1 L1163.8 378.4 L1176.0 373.1 L1188.2 356.6 L1200.4 381.2 L1212.5 381.2 L1224.7 329.9 L1236.9 358.2 L1249.1 373.6 L1261.3 349.7 L1273.5 335.5 L1285.7 379.3 L1297.9 345.1 L1310.1 352.0 L1322.3 344.4 L1334.4 373.6 L1346.6 320.8 L1358.8 375.0 L1371.0 263.3 L1383.2 369.7 L1395.4 322.6 L1407.6 361.0 L1419.8 368.5 L1432.0 375.0 L1444.2 321.7 L1456.3 375.9 L1468.5 372.0 L1480.7 374.8 L1492.9 341.0 L1505.1 374.8 L1517.3 356.6 L1529.5 380.0 L1541.7 373.6 L1553.9 379.3 L1566.1 353.4 L1578.2 332.2 L1590.4 344.9 L1602.6 378.4 L1614.8 340.7 L1627.0 370.2 L1639.2 300.8 L1651.4 358.2 L1663.6 367.4 L1675.8 286.3 L1688.0 380.5 L1700.1 380.5 L1712.3 379.6 L1724.5 380.5 L1736.7 380.5 L1748.9 368.1 L1761.1 380.5 L1773.3 378.4 L1785.5 379.6 L1797.7 380.3 L1809.9 380.5 L1822.0 379.8 L1834.2 380.5 L1846.4 380.3 L1858.6 380.5 L1870.8 346.7" fill="none" stroke="#285b7b" stroke-width="2" stroke-linejoin="round"/><path d="M1151.6 353.1l4 4-4 4-4-4z" fill="#285b7b"/><path d="M1163.8 374.4l4 4-4 4-4-4z" fill="#285b7b"/><path d="M1176.0 369.1l4 4-4 4-4-4z" fill="#285b7b"/><path d="M1188.2 352.6l4 4-4 4-4-4z" fill="#285b7b"/><path d="M1200.4 377.2l4 4-4 4-4-4z" fill="#285b7b"/><path d="M1212.5 377.2l4 4-4 4-4-4z" fill="#285b7b"/><path d="M1224.7 325.9l4 4-4 4-4-4z" fill="#285b7b"/><path d="M1236.9 354.2l4 4-4 4-4-4z" fill="#285b7b"/><path d="M1249.1 369.6l4 4-4 4-4-4z" fill="#285b7b"/><path d="M1261.3 345.7l4 4-4 4-4-4z" fill="#285b7b"/><path d="M1273.5 331.5l4 4-4 4-4-4z" fill="#285b7b"/><path d="M1285.7 375.3l4 4-4 4-4-4z" fill="#285b7b"/><path d="M1297.9 341.1l4 4-4 4-4-4z" fill="#285b7b"/><path d="M1310.1 348.0l4 4-4 4-4-4z" fill="#285b7b"/><path d="M1322.3 340.4l4 4-4 4-4-4z" fill="#285b7b"/><path d="M1334.4 369.6l4 4-4 4-4-4z" fill="#285b7b"/><path d="M1346.6 316.8l4 4-4 4-4-4z" fill="#285b7b"/><path d="M1358.8 371.0l4 4-4 4-4-4z" fill="#285b7b"/><path d="M1371.0 259.3l4 4-4 4-4-4z" fill="#285b7b"/><path d="M1383.2 365.7l4 4-4 4-4-4z" fill="#285b7b"/><path d="M1395.4 318.6l4 4-4 4-4-4z" fill="#285b7b"/><path d="M1407.6 357.0l4 4-4 4-4-4z" fill="#285b7b"/><path d="M1419.8 364.5l4 4-4 4-4-4z" fill="#285b7b"/><path d="M1432.0 371.0l4 4-4 4-4-4z" fill="#285b7b"/><path d="M1444.2 317.7l4 4-4 4-4-4z" fill="#285b7b"/><path d="M1456.3 371.9l4 4-4 4-4-4z" fill="#285b7b"/><path d="M1468.5 368.0l4 4-4 4-4-4z" fill="#285b7b"/><path d="M1480.7 370.8l4 4-4 4-4-4z" fill="#285b7b"/><path d="M1492.9 337.0l4 4-4 4-4-4z" fill="#285b7b"/><path d="M1505.1 370.8l4 4-4 4-4-4z" fill="#285b7b"/><path d="M1517.3 352.6l4 4-4 4-4-4z" fill="#285b7b"/><path d="M1529.5 376.0l4 4-4 4-4-4z" fill="#285b7b"/><path d="M1541.7 369.6l4 4-4 4-4-4z" fill="#285b7b"/><path d="M1553.9 375.3l4 4-4 4-4-4z" fill="#285b7b"/><path d="M1566.1 349.4l4 4-4 4-4-4z" fill="#285b7b"/><path d="M1578.2 328.2l4 4-4 4-4-4z" fill="#285b7b"/><path d="M1590.4 340.9l4 4-4 4-4-4z" fill="#285b7b"/><path d="M1602.6 374.4l4 4-4 4-4-4z" fill="#285b7b"/><path d="M1614.8 336.7l4 4-4 4-4-4z" fill="#285b7b"/><path d="M1627.0 366.2l4 4-4 4-4-4z" fill="#285b7b"/><path d="M1639.2 296.8l4 4-4 4-4-4z" fill="#285b7b"/><path d="M1651.4 354.2l4 4-4 4-4-4z" fill="#285b7b"/><path d="M1663.6 363.4l4 4-4 4-4-4z" fill="#285b7b"/><path d="M1675.8 282.3l4 4-4 4-4-4z" fill="#285b7b"/><path d="M1688.0 376.5l4 4-4 4-4-4z" fill="#285b7b"/><path d="M1700.1 376.5l4 4-4 4-4-4z" fill="#285b7b"/><path d="M1712.3 375.6l4 4-4 4-4-4z" fill="#285b7b"/><path d="M1724.5 376.5l4 4-4 4-4-4z" fill="#285b7b"/><path d="M1736.7 376.5l4 4-4 4-4-4z" fill="#285b7b"/><path d="M1748.9 364.1l4 4-4 4-4-4z" fill="#285b7b"/><path d="M1761.1 376.5l4 4-4 4-4-4z" fill="#285b7b"/><path d="M1773.3 374.4l4 4-4 4-4-4z" fill="#285b7b"/><path d="M1785.5 375.6l4 4-4 4-4-4z" fill="#285b7b"/><path d="M1797.7 376.3l4 4-4 4-4-4z" fill="#285b7b"/><path d="M1809.9 376.5l4 4-4 4-4-4z" fill="#285b7b"/><path d="M1822.0 375.8l4 4-4 4-4-4z" fill="#285b7b"/><path d="M1834.2 376.5l4 4-4 4-4-4z" fill="#285b7b"/><path d="M1846.4 376.3l4 4-4 4-4-4z" fill="#285b7b"/><path d="M1858.6 376.5l4 4-4 4-4-4z" fill="#285b7b"/><path d="M1870.8 342.7l4 4-4 4-4-4z" fill="#285b7b"/><path d="M1371.5 427.5h15.5" stroke="#97bf3d" stroke-width="2"/><circle cx="1379" cy="427.5" r="4" fill="#97bf3d"/><text x="1392.5" y="432" font-size="12" font-weight="bold" fill="#333" font-family="DejaVu Sans Condensed,DejaVu Sans,sans-serif">bytes_sent</text><path d="M1478.5 427.5h15.5" stroke="#285b7b" stroke-width="2"/><path d="M1486.2 423.5l4 4-4 4-4-4z" fill="#285b7b"/><text x="1499.5" y="432" font-size="12" font-weight="bold" fill="#333" font-family="DejaVu Sans Condensed,DejaVu Sans,sans-serif">bytes_received</text></svg>
<svg class="a cv" style="left:217.29999999999995px;top:770px" width="836" height="240" viewBox="1062 210 836 240"><path d="M1146 225.5H1879.0" stroke="#d8d8d8" stroke-width="1"/><text x="1130.5" y="231" text-anchor="end" font-size="11" fill="#555">400.00M</text><path d="M1146 265.5H1879.0" stroke="#d8d8d8" stroke-width="1"/><text x="1130.5" y="269" text-anchor="end" font-size="11" fill="#555">300.00M</text><path d="M1146 304.5H1879.0" stroke="#d8d8d8" stroke-width="1"/><text x="1130.5" y="308" text-anchor="end" font-size="11" fill="#555">200.00M</text><path d="M1146 342.5H1879.0" stroke="#d8d8d8" stroke-width="1"/><text x="1130.5" y="347" text-anchor="end" font-size="11" fill="#555">100.00M</text><path d="M1146 381.5H1879.0" stroke="#c0d0e0" stroke-width="1"/><text x="1130.5" y="386" text-anchor="end" font-size="11" fill="#555">0</text><path d="M1151.6 381.5v9.5" stroke="#c0d0e0" stroke-width="1"/><text x="1151.6" y="400" text-anchor="middle" font-size="11" fill="#555">13</text><path d="M1273.8 381.5v9.5" stroke="#c0d0e0" stroke-width="1"/><text x="1273.8" y="400" text-anchor="middle" font-size="11" fill="#555">18</text><path d="M1395.9 381.5v9.5" stroke="#c0d0e0" stroke-width="1"/><text x="1395.9" y="400" text-anchor="middle" font-size="11" fill="#555">23</text><path d="M1518.1 381.5v9.5" stroke="#c0d0e0" stroke-width="1"/><text x="1518.1" y="400" text-anchor="middle" font-size="11" fill="#555">28</text><path d="M1640.2 381.5v9.5" stroke="#c0d0e0" stroke-width="1"/><text x="1640.2" y="400" text-anchor="middle" font-size="11" fill="#555">03</text><path d="M1762.4 381.5v9.5" stroke="#c0d0e0" stroke-width="1"/><text x="1762.4" y="400" text-anchor="middle" font-size="11" fill="#555">08</text><path d="M1151.6 374.3 L1163.8 374.3 L1176.0 374.5 L1188.2 374.0 L1200.4 379.0 L1212.6 379.2 L1224.8 377.0 L1237.0 380.0 L1249.2 379.3 L1261.5 379.3 L1273.7 378.8 L1285.9 379.3 L1298.1 379.3 L1310.3 379.3 L1322.5 379.3 L1334.7 379.3 L1346.9 378.2 L1359.1 379.3 L1371.3 375.4 L1383.5 379.3 L1395.7 378.0 L1407.9 379.3 L1420.1 379.3 L1432.3 379.3 L1444.5 378.0 L1456.7 379.3 L1469.0 378.6 L1481.2 379.3 L1493.4 378.2 L1505.6 379.3 L1517.8 379.3 L1530.0 379.3 L1542.2 379.3 L1554.4 379.3 L1566.6 379.3 L1578.8 379.3 L1591.0 379.3 L1603.2 379.3 L1615.4 379.3 L1627.6 379.3 L1639.8 373.8 L1652.0 379.3 L1664.2 379.3 L1676.5 377.0 L1688.7 379.3 L1700.9 379.3 L1713.1 379.3 L1725.3 379.3 L1737.5 379.3 L1749.7 379.3 L1761.9 379.3 L1774.1 379.3 L1786.3 379.3 L1798.5 379.3 L1810.7 379.3 L1822.9 379.3 L1835.1 379.3 L1847.3 379.3 L1859.5 379.3 L1871.7 378.9" fill="none" stroke="#97bf3d" stroke-width="2" stroke-linejoin="round"/><circle cx="1151.6" cy="374.3" r="4" fill="#97bf3d"/><circle cx="1163.8" cy="374.3" r="4" fill="#97bf3d"/><circle cx="1176.0" cy="374.5" r="4" fill="#97bf3d"/><circle cx="1188.2" cy="374.0" r="4" fill="#97bf3d"/><circle cx="1200.4" cy="379.0" r="4" fill="#97bf3d"/><circle cx="1212.6" cy="379.2" r="4" fill="#97bf3d"/><circle cx="1224.8" cy="377.0" r="4" fill="#97bf3d"/><circle cx="1237.0" cy="380.0" r="4" fill="#97bf3d"/><circle cx="1249.2" cy="379.3" r="4" fill="#97bf3d"/><circle cx="1261.5" cy="379.3" r="4" fill="#97bf3d"/><circle cx="1273.7" cy="378.8" r="4" fill="#97bf3d"/><circle cx="1285.9" cy="379.3" r="4" fill="#97bf3d"/><circle cx="1298.1" cy="379.3" r="4" fill="#97bf3d"/><circle cx="1310.3" cy="379.3" r="4" fill="#97bf3d"/><circle cx="1322.5" cy="379.3" r="4" fill="#97bf3d"/><circle cx="1334.7" cy="379.3" r="4" fill="#97bf3d"/><circle cx="1346.9" cy="378.2" r="4" fill="#97bf3d"/><circle cx="1359.1" cy="379.3" r="4" fill="#97bf3d"/><circle cx="1371.3" cy="375.4" r="4" fill="#97bf3d"/><circle cx="1383.5" cy="379.3" r="4" fill="#97bf3d"/><circle cx="1395.7" cy="378.0" r="4" fill="#97bf3d"/><circle cx="1407.9" cy="379.3" r="4" fill="#97bf3d"/><circle cx="1420.1" cy="379.3" r="4" fill="#97bf3d"/><circle cx="1432.3" cy="379.3" r="4" fill="#97bf3d"/><circle cx="1444.5" cy="378.0" r="4" fill="#97bf3d"/><circle cx="1456.7" cy="379.3" r="4" fill="#97bf3d"/><circle cx="1469.0" cy="378.6" r="4" fill="#97bf3d"/><circle cx="1481.2" cy="379.3" r="4" fill="#97bf3d"/><circle cx="1493.4" cy="378.2" r="4" fill="#97bf3d"/><circle cx="1505.6" cy="379.3" r="4" fill="#97bf3d"/><circle cx="1517.8" cy="379.3" r="4" fill="#97bf3d"/><circle cx="1530.0" cy="379.3" r="4" fill="#97bf3d"/><circle cx="1542.2" cy="379.3" r="4" fill="#97bf3d"/><circle cx="1554.4" cy="379.3" r="4" fill="#97bf3d"/><circle cx="1566.6" cy="379.3" r="4" fill="#97bf3d"/><circle cx="1578.8" cy="379.3" r="4" fill="#97bf3d"/><circle cx="1591.0" cy="379.3" r="4" fill="#97bf3d"/><circle cx="1603.2" cy="379.3" r="4" fill="#97bf3d"/><circle cx="1615.4" cy="379.3" r="4" fill="#97bf3d"/><circle cx="1627.6" cy="379.3" r="4" fill="#97bf3d"/><circle cx="1639.8" cy="373.8" r="4" fill="#97bf3d"/><circle cx="1652.0" cy="379.3" r="4" fill="#97bf3d"/><circle cx="1664.2" cy="379.3" r="4" fill="#97bf3d"/><circle cx="1676.5" cy="377.0" r="4" fill="#97bf3d"/><circle cx="1688.7" cy="379.3" r="4" fill="#97bf3d"/><circle cx="1700.9" cy="379.3" r="4" fill="#97bf3d"/><circle cx="1713.1" cy="379.3" r="4" fill="#97bf3d"/><circle cx="1725.3" cy="379.3" r="4" fill="#97bf3d"/><circle cx="1737.5" cy="379.3" r="4" fill="#97bf3d"/><circle cx="1749.7" cy="379.3" r="4" fill="#97bf3d"/><circle cx="1761.9" cy="379.3" r="4" fill="#97bf3d"/><circle cx="1774.1" cy="379.3" r="4" fill="#97bf3d"/><circle cx="1786.3" cy="379.3" r="4" fill="#97bf3d"/><circle cx="1798.5" cy="379.3" r="4" fill="#97bf3d"/><circle cx="1810.7" cy="379.3" r="4" fill="#97bf3d"/><circle cx="1822.9" cy="379.3" r="4" fill="#97bf3d"/><circle cx="1835.1" cy="379.3" r="4" fill="#97bf3d"/><circle cx="1847.3" cy="379.3" r="4" fill="#97bf3d"/><circle cx="1859.5" cy="379.3" r="4" fill="#97bf3d"/><circle cx="1871.7" cy="378.9" r="4" fill="#97bf3d"/><path d="M1151.6 357.1 L1163.8 378.4 L1176.0 373.1 L1188.2 356.6 L1200.4 381.2 L1212.6 381.2 L1224.8 329.9 L1237.0 358.2 L1249.2 373.6 L1261.5 349.7 L1273.7 335.5 L1285.9 379.3 L1298.1 345.1 L1310.3 352.0 L1322.5 344.4 L1334.7 373.6 L1346.9 320.8 L1359.1 375.0 L1371.3 263.3 L1383.5 369.7 L1395.7 322.6 L1407.9 361.0 L1420.1 368.5 L1432.3 375.0 L1444.5 321.7 L1456.7 375.9 L1469.0 372.0 L1481.2 374.8 L1493.4 341.0 L1505.6 374.8 L1517.8 356.6 L1530.0 380.0 L1542.2 373.6 L1554.4 379.3 L1566.6 353.4 L1578.8 332.2 L1591.0 344.9 L1603.2 378.4 L1615.4 340.7 L1627.6 370.2 L1639.8 300.8 L1652.0 358.2 L1664.2 367.4 L1676.5 286.3 L1688.7 380.5 L1700.9 380.5 L1713.1 379.6 L1725.3 380.5 L1737.5 380.5 L1749.7 368.1 L1761.9 380.5 L1774.1 378.4 L1786.3 379.6 L1798.5 380.3 L1810.7 380.5 L1822.9 379.8 L1835.1 380.5 L1847.3 380.3 L1859.5 380.5 L1871.7 346.7" fill="none" stroke="#285b7b" stroke-width="2" stroke-linejoin="round"/><path d="M1151.6 353.1l4 4-4 4-4-4z" fill="#285b7b"/><path d="M1163.8 374.4l4 4-4 4-4-4z" fill="#285b7b"/><path d="M1176.0 369.1l4 4-4 4-4-4z" fill="#285b7b"/><path d="M1188.2 352.6l4 4-4 4-4-4z" fill="#285b7b"/><path d="M1200.4 377.2l4 4-4 4-4-4z" fill="#285b7b"/><path d="M1212.6 377.2l4 4-4 4-4-4z" fill="#285b7b"/><path d="M1224.8 325.9l4 4-4 4-4-4z" fill="#285b7b"/><path d="M1237.0 354.2l4 4-4 4-4-4z" fill="#285b7b"/><path d="M1249.2 369.6l4 4-4 4-4-4z" fill="#285b7b"/><path d="M1261.5 345.7l4 4-4 4-4-4z" fill="#285b7b"/><path d="M1273.7 331.5l4 4-4 4-4-4z" fill="#285b7b"/><path d="M1285.9 375.3l4 4-4 4-4-4z" fill="#285b7b"/><path d="M1298.1 341.1l4 4-4 4-4-4z" fill="#285b7b"/><path d="M1310.3 348.0l4 4-4 4-4-4z" fill="#285b7b"/><path d="M1322.5 340.4l4 4-4 4-4-4z" fill="#285b7b"/><path d="M1334.7 369.6l4 4-4 4-4-4z" fill="#285b7b"/><path d="M1346.9 316.8l4 4-4 4-4-4z" fill="#285b7b"/><path d="M1359.1 371.0l4 4-4 4-4-4z" fill="#285b7b"/><path d="M1371.3 259.3l4 4-4 4-4-4z" fill="#285b7b"/><path d="M1383.5 365.7l4 4-4 4-4-4z" fill="#285b7b"/><path d="M1395.7 318.6l4 4-4 4-4-4z" fill="#285b7b"/><path d="M1407.9 357.0l4 4-4 4-4-4z" fill="#285b7b"/><path d="M1420.1 364.5l4 4-4 4-4-4z" fill="#285b7b"/><path d="M1432.3 371.0l4 4-4 4-4-4z" fill="#285b7b"/><path d="M1444.5 317.7l4 4-4 4-4-4z" fill="#285b7b"/><path d="M1456.7 371.9l4 4-4 4-4-4z" fill="#285b7b"/><path d="M1469.0 368.0l4 4-4 4-4-4z" fill="#285b7b"/><path d="M1481.2 370.8l4 4-4 4-4-4z" fill="#285b7b"/><path d="M1493.4 337.0l4 4-4 4-4-4z" fill="#285b7b"/><path d="M1505.6 370.8l4 4-4 4-4-4z" fill="#285b7b"/><path d="M1517.8 352.6l4 4-4 4-4-4z" fill="#285b7b"/><path d="M1530.0 376.0l4 4-4 4-4-4z" fill="#285b7b"/><path d="M1542.2 369.6l4 4-4 4-4-4z" fill="#285b7b"/><path d="M1554.4 375.3l4 4-4 4-4-4z" fill="#285b7b"/><path d="M1566.6 349.4l4 4-4 4-4-4z" fill="#285b7b"/><path d="M1578.8 328.2l4 4-4 4-4-4z" fill="#285b7b"/><path d="M1591.0 340.9l4 4-4 4-4-4z" fill="#285b7b"/><path d="M1603.2 374.4l4 4-4 4-4-4z" fill="#285b7b"/><path d="M1615.4 336.7l4 4-4 4-4-4z" fill="#285b7b"/><path d="M1627.6 366.2l4 4-4 4-4-4z" fill="#285b7b"/><path d="M1639.8 296.8l4 4-4 4-4-4z" fill="#285b7b"/><path d="M1652.0 354.2l4 4-4 4-4-4z" fill="#285b7b"/><path d="M1664.2 363.4l4 4-4 4-4-4z" fill="#285b7b"/><path d="M1676.5 282.3l4 4-4 4-4-4z" fill="#285b7b"/><path d="M1688.7 376.5l4 4-4 4-4-4z" fill="#285b7b"/><path d="M1700.9 376.5l4 4-4 4-4-4z" fill="#285b7b"/><path d="M1713.1 375.6l4 4-4 4-4-4z" fill="#285b7b"/><path d="M1725.3 376.5l4 4-4 4-4-4z" fill="#285b7b"/><path d="M1737.5 376.5l4 4-4 4-4-4z" fill="#285b7b"/><path d="M1749.7 364.1l4 4-4 4-4-4z" fill="#285b7b"/><path d="M1761.9 376.5l4 4-4 4-4-4z" fill="#285b7b"/><path d="M1774.1 374.4l4 4-4 4-4-4z" fill="#285b7b"/><path d="M1786.3 375.6l4 4-4 4-4-4z" fill="#285b7b"/><path d="M1798.5 376.3l4 4-4 4-4-4z" fill="#285b7b"/><path d="M1810.7 376.5l4 4-4 4-4-4z" fill="#285b7b"/><path d="M1822.9 375.8l4 4-4 4-4-4z" fill="#285b7b"/><path d="M1835.1 376.5l4 4-4 4-4-4z" fill="#285b7b"/><path d="M1847.3 376.3l4 4-4 4-4-4z" fill="#285b7b"/><path d="M1859.5 376.5l4 4-4 4-4-4z" fill="#285b7b"/><path d="M1871.7 342.7l4 4-4 4-4-4z" fill="#285b7b"/></svg>
<svg class="a cv" style="left:1062px;top:770px" width="836" height="240" viewBox="1062 210 836 240"><path d="M1146 225.5H1878.0" stroke="#d8d8d8" stroke-width="1"/><text x="1130.5" y="231" text-anchor="end" font-size="11" fill="#555">400.00M</text><path d="M1146 265.5H1878.0" stroke="#d8d8d8" stroke-width="1"/><text x="1130.5" y="269" text-anchor="end" font-size="11" fill="#555">300.00M</text><path d="M1146 304.5H1878.0" stroke="#d8d8d8" stroke-width="1"/><text x="1130.5" y="308" text-anchor="end" font-size="11" fill="#555">200.00M</text><path d="M1146 342.5H1878.0" stroke="#d8d8d8" stroke-width="1"/><text x="1130.5" y="347" text-anchor="end" font-size="11" fill="#555">100.00M</text><path d="M1146 381.5H1878.0" stroke="#c0d0e0" stroke-width="1"/><text x="1130.5" y="386" text-anchor="end" font-size="11" fill="#555">0</text><path d="M1151.6 381.5v9.5" stroke="#c0d0e0" stroke-width="1"/><text x="1151.6" y="400" text-anchor="middle" font-size="11" fill="#555">13</text><path d="M1273.6 381.5v9.5" stroke="#c0d0e0" stroke-width="1"/><text x="1273.6" y="400" text-anchor="middle" font-size="11" fill="#555">18</text><path d="M1395.6 381.5v9.5" stroke="#c0d0e0" stroke-width="1"/><text x="1395.6" y="400" text-anchor="middle" font-size="11" fill="#555">23</text><path d="M1517.6 381.5v9.5" stroke="#c0d0e0" stroke-width="1"/><text x="1517.6" y="400" text-anchor="middle" font-size="11" fill="#555">28</text><path d="M1639.6 381.5v9.5" stroke="#c0d0e0" stroke-width="1"/><text x="1639.6" y="400" text-anchor="middle" font-size="11" fill="#555">03</text><path d="M1761.6 381.5v9.5" stroke="#c0d0e0" stroke-width="1"/><text x="1761.6" y="400" text-anchor="middle" font-size="11" fill="#555">08</text><path d="M1151.6 374.3 L1163.8 374.3 L1176.0 374.5 L1188.2 374.0 L1200.4 379.0 L1212.5 379.2 L1224.7 377.0 L1236.9 380.0 L1249.1 379.3 L1261.3 379.3 L1273.5 378.8 L1285.7 379.3 L1297.9 379.3 L1310.1 379.3 L1322.3 379.3 L1334.4 379.3 L1346.6 378.2 L1358.8 379.3 L1371.0 375.4 L1383.2 379.3 L1395.4 378.0 L1407.6 379.3 L1419.8 379.3 L1432.0 379.3 L1444.2 378.0 L1456.3 379.3 L1468.5 378.6 L1480.7 379.3 L1492.9 378.2 L1505.1 379.3 L1517.3 379.3 L1529.5 379.3 L1541.7 379.3 L1553.9 379.3 L1566.1 379.3 L1578.2 379.3 L1590.4 379.3 L1602.6 379.3 L1614.8 379.3 L1627.0 379.3 L1639.2 373.8 L1651.4 379.3 L1663.6 379.3 L1675.8 377.0 L1688.0 379.3 L1700.1 379.3 L1712.3 379.3 L1724.5 379.3 L1736.7 379.3 L1748.9 379.3 L1761.1 379.3 L1773.3 379.3 L1785.5 379.3 L1797.7 379.3 L1809.9 379.3 L1822.0 379.3 L1834.2 379.3 L1846.4 379.3 L1858.6 379.3 L1870.8 378.9" fill="none" stroke="#97bf3d" stroke-width="2" stroke-linejoin="round"/><circle cx="1151.6" cy="374.3" r="4" fill="#97bf3d"/><circle cx="1163.8" cy="374.3" r="4" fill="#97bf3d"/><circle cx="1176.0" cy="374.5" r="4" fill="#97bf3d"/><circle cx="1188.2" cy="374.0" r="4" fill="#97bf3d"/><circle cx="1200.4" cy="379.0" r="4" fill="#97bf3d"/><circle cx="1212.5" cy="379.2" r="4" fill="#97bf3d"/><circle cx="1224.7" cy="377.0" r="4" fill="#97bf3d"/><circle cx="1236.9" cy="380.0" r="4" fill="#97bf3d"/><circle cx="1249.1" cy="379.3" r="4" fill="#97bf3d"/><circle cx="1261.3" cy="379.3" r="4" fill="#97bf3d"/><circle cx="1273.5" cy="378.8" r="4" fill="#97bf3d"/><circle cx="1285.7" cy="379.3" r="4" fill="#97bf3d"/><circle cx="1297.9" cy="379.3" r="4" fill="#97bf3d"/><circle cx="1310.1" cy="379.3" r="4" fill="#97bf3d"/><circle cx="1322.3" cy="379.3" r="4" fill="#97bf3d"/><circle cx="1334.4" cy="379.3" r="4" fill="#97bf3d"/><circle cx="1346.6" cy="378.2" r="4" fill="#97bf3d"/><circle cx="1358.8" cy="379.3" r="4" fill="#97bf3d"/><circle cx="1371.0" cy="375.4" r="4" fill="#97bf3d"/><circle cx="1383.2" cy="379.3" r="4" fill="#97bf3d"/><circle cx="1395.4" cy="378.0" r="4" fill="#97bf3d"/><circle cx="1407.6" cy="379.3" r="4" fill="#97bf3d"/><circle cx="1419.8" cy="379.3" r="4" fill="#97bf3d"/><circle cx="1432.0" cy="379.3" r="4" fill="#97bf3d"/><circle cx="1444.2" cy="378.0" r="4" fill="#97bf3d"/><circle cx="1456.3" cy="379.3" r="4" fill="#97bf3d"/><circle cx="1468.5" cy="378.6" r="4" fill="#97bf3d"/><circle cx="1480.7" cy="379.3" r="4" fill="#97bf3d"/><circle cx="1492.9" cy="378.2" r="4" fill="#97bf3d"/><circle cx="1505.1" cy="379.3" r="4" fill="#97bf3d"/><circle cx="1517.3" cy="379.3" r="4" fill="#97bf3d"/><circle cx="1529.5" cy="379.3" r="4" fill="#97bf3d"/><circle cx="1541.7" cy="379.3" r="4" fill="#97bf3d"/><circle cx="1553.9" cy="379.3" r="4" fill="#97bf3d"/><circle cx="1566.1" cy="379.3" r="4" fill="#97bf3d"/><circle cx="1578.2" cy="379.3" r="4" fill="#97bf3d"/><circle cx="1590.4" cy="379.3" r="4" fill="#97bf3d"/><circle cx="1602.6" cy="379.3" r="4" fill="#97bf3d"/><circle cx="1614.8" cy="379.3" r="4" fill="#97bf3d"/><circle cx="1627.0" cy="379.3" r="4" fill="#97bf3d"/><circle cx="1639.2" cy="373.8" r="4" fill="#97bf3d"/><circle cx="1651.4" cy="379.3" r="4" fill="#97bf3d"/><circle cx="1663.6" cy="379.3" r="4" fill="#97bf3d"/><circle cx="1675.8" cy="377.0" r="4" fill="#97bf3d"/><circle cx="1688.0" cy="379.3" r="4" fill="#97bf3d"/><circle cx="1700.1" cy="379.3" r="4" fill="#97bf3d"/><circle cx="1712.3" cy="379.3" r="4" fill="#97bf3d"/><circle cx="1724.5" cy="379.3" r="4" fill="#97bf3d"/><circle cx="1736.7" cy="379.3" r="4" fill="#97bf3d"/><circle cx="1748.9" cy="379.3" r="4" fill="#97bf3d"/><circle cx="1761.1" cy="379.3" r="4" fill="#97bf3d"/><circle cx="1773.3" cy="379.3" r="4" fill="#97bf3d"/><circle cx="1785.5" cy="379.3" r="4" fill="#97bf3d"/><circle cx="1797.7" cy="379.3" r="4" fill="#97bf3d"/><circle cx="1809.9" cy="379.3" r="4" fill="#97bf3d"/><circle cx="1822.0" cy="379.3" r="4" fill="#97bf3d"/><circle cx="1834.2" cy="379.3" r="4" fill="#97bf3d"/><circle cx="1846.4" cy="379.3" r="4" fill="#97bf3d"/><circle cx="1858.6" cy="379.3" r="4" fill="#97bf3d"/><circle cx="1870.8" cy="378.9" r="4" fill="#97bf3d"/><path d="M1151.6 357.1 L1163.8 378.4 L1176.0 373.1 L1188.2 356.6 L1200.4 381.2 L1212.5 381.2 L1224.7 329.9 L1236.9 358.2 L1249.1 373.6 L1261.3 349.7 L1273.5 335.5 L1285.7 379.3 L1297.9 345.1 L1310.1 352.0 L1322.3 344.4 L1334.4 373.6 L1346.6 320.8 L1358.8 375.0 L1371.0 263.3 L1383.2 369.7 L1395.4 322.6 L1407.6 361.0 L1419.8 368.5 L1432.0 375.0 L1444.2 321.7 L1456.3 375.9 L1468.5 372.0 L1480.7 374.8 L1492.9 341.0 L1505.1 374.8 L1517.3 356.6 L1529.5 380.0 L1541.7 373.6 L1553.9 379.3 L1566.1 353.4 L1578.2 332.2 L1590.4 344.9 L1602.6 378.4 L1614.8 340.7 L1627.0 370.2 L1639.2 300.8 L1651.4 358.2 L1663.6 367.4 L1675.8 286.3 L1688.0 380.5 L1700.1 380.5 L1712.3 379.6 L1724.5 380.5 L1736.7 380.5 L1748.9 368.1 L1761.1 380.5 L1773.3 378.4 L1785.5 379.6 L1797.7 380.3 L1809.9 380.5 L1822.0 379.8 L1834.2 380.5 L1846.4 380.3 L1858.6 380.5 L1870.8 346.7" fill="none" stroke="#285b7b" stroke-width="2" stroke-linejoin="round"/><path d="M1151.6 353.1l4 4-4 4-4-4z" fill="#285b7b"/><path d="M1163.8 374.4l4 4-4 4-4-4z" fill="#285b7b"/><path d="M1176.0 369.1l4 4-4 4-4-4z" fill="#285b7b"/><path d="M1188.2 352.6l4 4-4 4-4-4z" fill="#285b7b"/><path d="M1200.4 377.2l4 4-4 4-4-4z" fill="#285b7b"/><path d="M1212.5 377.2l4 4-4 4-4-4z" fill="#285b7b"/><path d="M1224.7 325.9l4 4-4 4-4-4z" fill="#285b7b"/><path d="M1236.9 354.2l4 4-4 4-4-4z" fill="#285b7b"/><path d="M1249.1 369.6l4 4-4 4-4-4z" fill="#285b7b"/><path d="M1261.3 345.7l4 4-4 4-4-4z" fill="#285b7b"/><path d="M1273.5 331.5l4 4-4 4-4-4z" fill="#285b7b"/><path d="M1285.7 375.3l4 4-4 4-4-4z" fill="#285b7b"/><path d="M1297.9 341.1l4 4-4 4-4-4z" fill="#285b7b"/><path d="M1310.1 348.0l4 4-4 4-4-4z" fill="#285b7b"/><path d="M1322.3 340.4l4 4-4 4-4-4z" fill="#285b7b"/><path d="M1334.4 369.6l4 4-4 4-4-4z" fill="#285b7b"/><path d="M1346.6 316.8l4 4-4 4-4-4z" fill="#285b7b"/><path d="M1358.8 371.0l4 4-4 4-4-4z" fill="#285b7b"/><path d="M1371.0 259.3l4 4-4 4-4-4z" fill="#285b7b"/><path d="M1383.2 365.7l4 4-4 4-4-4z" fill="#285b7b"/><path d="M1395.4 318.6l4 4-4 4-4-4z" fill="#285b7b"/><path d="M1407.6 357.0l4 4-4 4-4-4z" fill="#285b7b"/><path d="M1419.8 364.5l4 4-4 4-4-4z" fill="#285b7b"/><path d="M1432.0 371.0l4 4-4 4-4-4z" fill="#285b7b"/><path d="M1444.2 317.7l4 4-4 4-4-4z" fill="#285b7b"/><path d="M1456.3 371.9l4 4-4 4-4-4z" fill="#285b7b"/><path d="M1468.5 368.0l4 4-4 4-4-4z" fill="#285b7b"/><path d="M1480.7 370.8l4 4-4 4-4-4z" fill="#285b7b"/><path d="M1492.9 337.0l4 4-4 4-4-4z" fill="#285b7b"/><path d="M1505.1 370.8l4 4-4 4-4-4z" fill="#285b7b"/><path d="M1517.3 352.6l4 4-4 4-4-4z" fill="#285b7b"/><path d="M1529.5 376.0l4 4-4 4-4-4z" fill="#285b7b"/><path d="M1541.7 369.6l4 4-4 4-4-4z" fill="#285b7b"/><path d="M1553.9 375.3l4 4-4 4-4-4z" fill="#285b7b"/><path d="M1566.1 349.4l4 4-4 4-4-4z" fill="#285b7b"/><path d="M1578.2 328.2l4 4-4 4-4-4z" fill="#285b7b"/><path d="M1590.4 340.9l4 4-4 4-4-4z" fill="#285b7b"/><path d="M1602.6 374.4l4 4-4 4-4-4z" fill="#285b7b"/><path d="M1614.8 336.7l4 4-4 4-4-4z" fill="#285b7b"/><path d="M1627.0 366.2l4 4-4 4-4-4z" fill="#285b7b"/><path d="M1639.2 296.8l4 4-4 4-4-4z" fill="#285b7b"/><path d="M1651.4 354.2l4 4-4 4-4-4z" fill="#285b7b"/><path d="M1663.6 363.4l4 4-4 4-4-4z" fill="#285b7b"/><path d="M1675.8 282.3l4 4-4 4-4-4z" fill="#285b7b"/><path d="M1688.0 376.5l4 4-4 4-4-4z" fill="#285b7b"/><path d="M1700.1 376.5l4 4-4 4-4-4z" fill="#285b7b"/><path d="M1712.3 375.6l4 4-4 4-4-4z" fill="#285b7b"/><path d="M1724.5 376.5l4 4-4 4-4-4z" fill="#285b7b"/><path d="M1736.7 376.5l4 4-4 4-4-4z" fill="#285b7b"/><path d="M1748.9 364.1l4 4-4 4-4-4z" fill="#285b7b"/><path d="M1761.1 376.5l4 4-4 4-4-4z" fill="#285b7b"/><path d="M1773.3 374.4l4 4-4 4-4-4z" fill="#285b7b"/><path d="M1785.5 375.6l4 4-4 4-4-4z" fill="#285b7b"/><path d="M1797.7 376.3l4 4-4 4-4-4z" fill="#285b7b"/><path d="M1809.9 376.5l4 4-4 4-4-4z" fill="#285b7b"/><path d="M1822.0 375.8l4 4-4 4-4-4z" fill="#285b7b"/><path d="M1834.2 376.5l4 4-4 4-4-4z" fill="#285b7b"/><path d="M1846.4 376.3l4 4-4 4-4-4z" fill="#285b7b"/><path d="M1858.6 376.5l4 4-4 4-4-4z" fill="#285b7b"/><path d="M1870.8 342.7l4 4-4 4-4-4z" fill="#285b7b"/></svg>
<div class="a" style="left:0px;top:971px;width:1920px;height:30px;background:#232b33;z-index:5"></div>
<span class="n" style="left:12px;top:979.00px;font-size:13px;color:#b9c5cb;transform:scaleX(0.806);z-index:6;transform:scaleX(0.76);">admin</span>
<span class="n" style="left:52px;top:979.00px;font-size:13px;color:#b9c5cb;transform:scaleX(0.806);z-index:6;text-decoration:underline;transform:scaleX(0.76);">Logout</span>
<span class="n" style="left:95px;top:979.00px;font-size:13px;color:#b9c5cb;transform:scaleX(0.806);z-index:6;">Last Login Time: 07/13/2020 10:06:29</span>
<div class="a" style="left:45.5px;top:979px;width:1.3px;height:13px;background:#b9c5cb;z-index:6"></div>
<div class="a" style="left:88.5px;top:979px;width:1.3px;height:13px;background:#b9c5cb;z-index:6"></div>
<div class="a" style="left:1802px;top:979px;width:1.3px;height:13px;background:#b9c5cb;z-index:6"></div>
<div class="a" style="left:1864px;top:979px;width:1.3px;height:13px;background:#b9c5cb;z-index:6"></div>
<svg class="a" style="left:277px;top:978px;z-index:6" width="16" height="16" viewBox="0 0 16 16"><path d="M7.5 1.6L14 14.3H1z" fill="#fbe585" stroke="#e9a91b" stroke-width="1.5" stroke-linejoin="round"/><path d="M7.5 6.9v4.1" stroke="#6b4700" stroke-width="1.5"/><rect x="6.8" y="11.9" width="1.4" height="1.1" fill="#6b4700"/></svg>
<svg class="a" style="left:1779px;top:981px;z-index:6" width="16" height="10" viewBox="0 0 16 10"><rect x="0.5" y="0.5" width="15" height="9" fill="#c3d9e0" stroke="#2a6a95"/><path d="M0.8 0.8C4 5.5 6 6 8 6s4-.5 7.2-5.2M0.8 9.2L5.4 4.6M15.2 9.2L10.6 4.6" fill="none" stroke="#3f7fa8" stroke-width="0.9"/></svg>
<svg class="a" style="left:1813px;top:979px;z-index:6" width="17" height="15" viewBox="0 0 17 15"><g fill="#fff" stroke="#3d7ea6" stroke-width="1"><rect x="0.5" y="0.5" width="3" height="3"/><rect x="0.5" y="5.5" width="3" height="3"/><rect x="0.5" y="10.5" width="3" height="3"/></g><path d="M6 2.5h9M6 7.5h3M6 12.5h3" stroke="#fff" stroke-width="1"/><circle cx="11.6" cy="10" r="2.7" fill="#f5a623" stroke="#e8950f" stroke-width="2.2" stroke-dasharray="1.5 1.1"/><circle cx="11" cy="10" r="0.9" fill="#f4f01c"/></svg>
<span class="n" style="left:1832px;top:979.00px;font-size:13px;color:#b9c5cb;transform:scaleX(0.806);z-index:6;transform:scaleX(0.73);">Tasks</span>
<span class="n" style="left:1871px;top:979.00px;font-size:13px;color:#b9c5cb;transform:scaleX(0.806);z-index:6;transform:scaleX(0.76);">Language</span>
<span class="n" style="left:25px;top:106.13px;font-size:14.5px;color:#6a6a6a;transform:scaleX(0.8);z-index:2;">Time</span>
<div class="a" style="left:18px;top:127px;width:180px;height:1px;background:#8a8a8a;z-index:2;"></div>
<div class="a" style="left:18px;top:128px;width:180px;height:1px;background:#ececec;z-index:2;"></div>
<div class="a" style="left:18px;top:217px;width:8px;height:1px;background:#8a8a8a;z-index:2;"></div>
<div class="a" style="left:18px;top:237px;width:8px;height:1px;background:#8a8a8a;z-index:2;"></div>
<div class="a" style="left:18px;top:305px;width:8px;height:1px;background:#8a8a8a;z-index:2;"></div>
<div class="a" style="left:23px;top:245px;width:3px;height:12px;background:#8594a0;z-index:2;border-radius:2px 0 0 2px;"></div>
<span class="rd on" style="left:18.4px;top:313.4px;z-index:2"></span>
<svg class="a" style="left:205px;top:513px;z-index:2" width="6" height="36" viewBox="0 0 6 36"><path d="M0 3.5h1.2v28H0z" fill="#aab1b8"/><path d="M1.2 3.5L4.6 0.5v35L1.2 31.5z" fill="#ebebeb" stroke="#d6d6d6" stroke-width="0.5"/><path d="M4 15v5.2L0.9 17.6z" fill="#8a8d90"/></svg>
<div class="a" style="left:25px;top:134px;width:173px;height:21px;background:#fff;border:1px solid #8e8e8e;border-bottom-width:1.3px;z-index:3"></div>
<div class="a" style="left:177.2px;top:134px;width:20.6px;height:20.5px;background:#e3e3e3;border:1px solid #c6c6c6;border-left:1px solid #8e8e8e;border-bottom:none;z-index:3"></div>
<svg class="a" style="left:182px;top:142px;z-index:3" width="11" height="6" viewBox="0 0 11 6"><path d="M0 0.2h10.4L5.2 5.2z" fill="#8a9aa5"/></svg>
<div class="a" style="left:29px;top:138px;width:62.5px;height:13.5px;background:#b5d5fd;z-index:3"></div>
<span class="t " style="left:29px;top:140.00px;z-index:4;color:#000;">Last 30 Days</span>
<div class="a" style="left:25px;top:155px;width:173px;height:249px;background:#fff;border:1px solid #9c9c9c;z-index:3"></div>
<div class="a" style="left:26px;top:384px;width:171px;height:19.5px;background:#d0dde4;border:1px dotted #7a7a7a;z-index:3"></div>
<span class="t " style="left:29px;top:161.00px;z-index:4;color:#000;">Last 15 Minutes</span>
<span class="t " style="left:29px;top:180.00px;z-index:4;color:#000;">Last Hour</span>
<span class="t " style="left:29px;top:199.00px;z-index:4;color:#000;">Last 6 Hrs</span>
<span class="t " style="left:29px;top:218.00px;z-index:4;color:#000;">Last 12 Hrs</span>
<span class="t " style="left:29px;top:237.00px;z-index:4;color:#000;">Last 24 Hrs</span>
<span class="t " style="left:29px;top:256.00px;z-index:4;color:#000;">Last Calendar Day</span>
<span class="t " style="left:29px;top:275.00px;z-index:4;color:#000;">Last 7 Days</span>
<span class="t " style="left:29px;top:294.00px;z-index:4;color:#000;">Last 7 Calendar Days</span>
<span class="t " style="left:29px;top:313.00px;z-index:4;color:#000;">Last Calendar Week</span>
<span class="t " style="left:29px;top:332.00px;z-index:4;color:#000;">Last 30 Days</span>
<span class="t " style="left:29px;top:351.00px;z-index:4;color:#000;">Last 30 Calendar Days</span>
<span class="t " style="left:29px;top:370.00px;z-index:4;color:#000;">Last Calendar Month</span>
<span class="t " style="left:29px;top:389.00px;z-index:4;color:#000;">Custom</span>
<svg class="a" style="left:0;top:50px;z-index:9" width="220" height="445" viewBox="0 50 220 445"><ellipse cx="108.6" cy="272.45" rx="103.25" ry="213.05" fill="none" stroke="#fe1e06" stroke-width="4.7"/></svg>
</div></body></html>
